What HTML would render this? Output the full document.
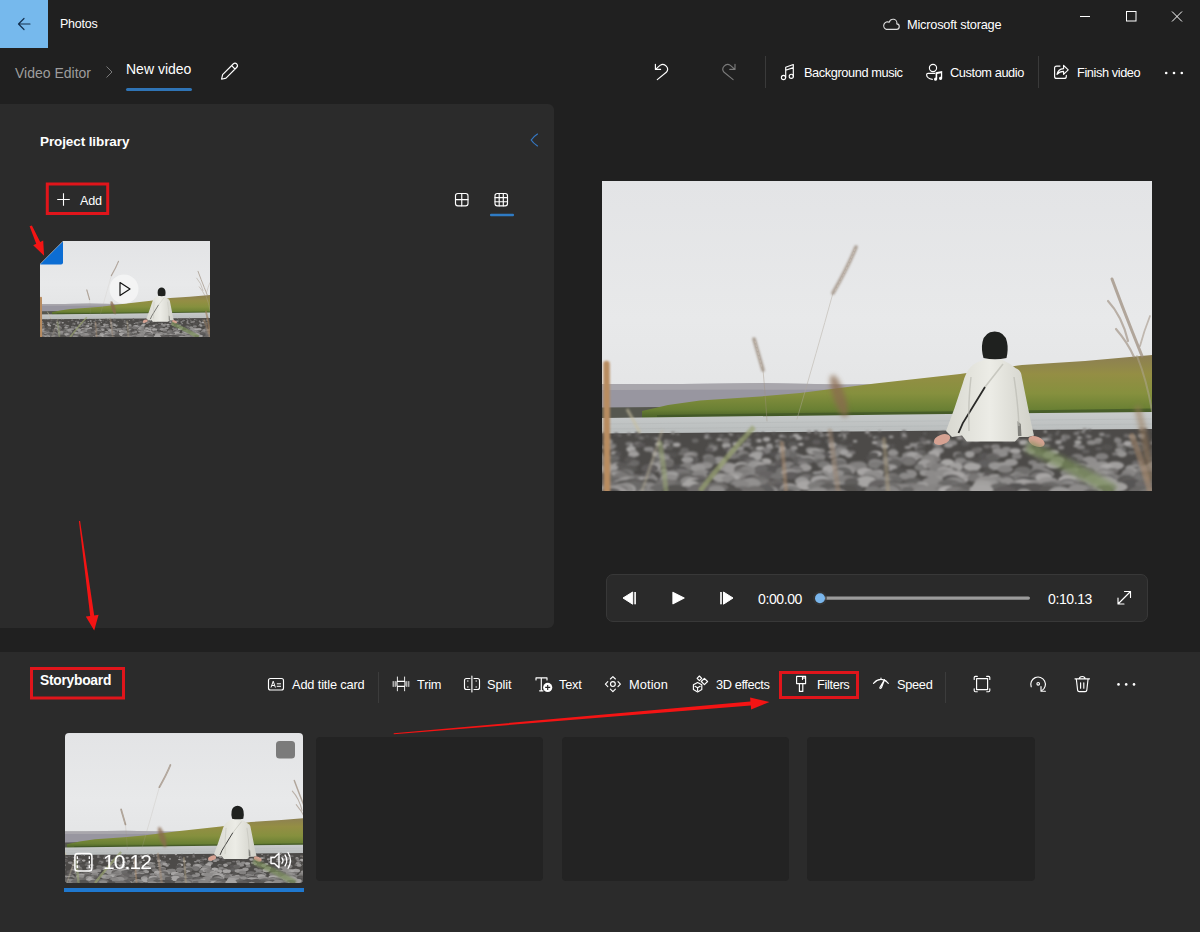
<!DOCTYPE html>
<html><head><meta charset="utf-8">
<style>
*{margin:0;padding:0;box-sizing:border-box}
html,body{width:1200px;height:932px;overflow:hidden;background:#202020;font-family:"Liberation Sans",sans-serif;color:#fff}
.a{position:absolute}
.t{position:absolute;white-space:nowrap;line-height:1}
svg.o{position:absolute;left:0;top:0}
.s{fill:none;stroke:#fff;stroke-width:1.15;stroke-linecap:round;stroke-linejoin:round}
</style></head><body>
<svg width="0" height="0" style="position:absolute"><symbol id="scene" viewBox="0 0 550 310">
<defs>
<linearGradient id="sky" x1="0" y1="0" x2="0" y2="1">
<stop offset="0" stop-color="#e3e4e6"/><stop offset="0.45" stop-color="#e8e9ea"/><stop offset="1" stop-color="#dfe0e1"/></linearGradient>
<linearGradient id="hill" x1="0" y1="0" x2="0" y2="1">
<stop offset="0" stop-color="#8c7e54"/><stop offset="0.3" stop-color="#948e44"/><stop offset="0.6" stop-color="#86903e"/><stop offset="0.85" stop-color="#6a8034"/><stop offset="1" stop-color="#445a26"/></linearGradient>
<linearGradient id="river" x1="0" y1="0" x2="0" y2="1">
<stop offset="0" stop-color="#c8cbcb"/><stop offset="1" stop-color="#b6baba"/></linearGradient>
<linearGradient id="jacket" x1="0" y1="0" x2="1" y2="0">
<stop offset="0" stop-color="#d8d8d0"/><stop offset="0.5" stop-color="#ecece6"/><stop offset="1" stop-color="#d0d0c8"/></linearGradient>
<filter id="b1" filterUnits="userSpaceOnUse" x="-50" y="-50" width="650" height="410"><feGaussianBlur stdDeviation="1.2"/></filter>
<filter id="b2" filterUnits="userSpaceOnUse" x="-50" y="-50" width="650" height="410"><feGaussianBlur stdDeviation="2.5"/></filter>
<filter id="b05" filterUnits="userSpaceOnUse" x="-50" y="-50" width="650" height="410"><feGaussianBlur stdDeviation="0.7"/></filter><filter id="b08" filterUnits="userSpaceOnUse" x="-50" y="-50" width="650" height="410"><feGaussianBlur stdDeviation="0.9"/></filter>
</defs>
<rect width="550" height="310" fill="url(#sky)"/>
<path d="M0 203 L80 203 L160 202 L240 203.5 L300 203 L360 201 L420 199 L420 240 L0 240Z" fill="#9896a0"/>
<path d="M0 203 L80 203 L160 202 L240 203.5 L300 203 L360 201 L420 199 L420 208 L0 209Z" fill="#b4b2b4" opacity="0.6" filter="url(#b05)"/>
<path d="M0 226.5 L60 226 L80 227 L80 238 L0 238Z" fill="#56574f"/>
<path d="M40 230 L66 224 L98 219.5 L158 215.5 L198 212 L273 202.5 L358 193 L420 184 L483 180 L550 174 L550 232 L300 234.5 L80 238 L40 238Z" fill="url(#hill)"/>
<path d="M55 234 L200 232 L380 230 L550 227.5 L550 232 L300 235 L55 238Z" fill="#3d5226" opacity="0.7"/>
<path d="M0 237 L300 233.5 L550 231 L550 256 L0 256Z" fill="url(#river)"/>
<path d="M0 243 L550 238 M0 248 L550 243" stroke="#a8acac" stroke-width="0.6" opacity="0.5"/>
<path d="M0 252.5 L550 248 L550 312 L0 312Z" fill="#4c4a48"/>
<g filter="url(#b08)">
<ellipse cx="539.1" cy="247.7" rx="2.2" ry="1.5" fill="#949291"/>
<ellipse cx="482.7" cy="248.3" rx="2.3" ry="1.4" fill="#92908f"/>
<ellipse cx="543.0" cy="248.6" rx="2.4" ry="1.3" fill="#646261"/>
<ellipse cx="487.8" cy="249.0" rx="1.7" ry="0.9" fill="#6c6a69"/>
<ellipse cx="401.4" cy="249.7" rx="1.6" ry="1.0" fill="#9d9b9a"/>
<ellipse cx="551.9" cy="249.9" rx="1.5" ry="0.9" fill="#6b6968"/>
<ellipse cx="277.7" cy="250.0" rx="1.6" ry="0.8" fill="#868483"/>
<ellipse cx="476.8" cy="250.1" rx="1.5" ry="0.9" fill="#716f6e"/>
<ellipse cx="349.6" cy="250.1" rx="1.4" ry="0.9" fill="#a6a4a3"/>
<ellipse cx="383.6" cy="250.2" rx="2.7" ry="1.5" fill="#555352"/>
<ellipse cx="430.7" cy="250.3" rx="2.1" ry="1.2" fill="#5b5958"/>
<ellipse cx="456.1" cy="250.6" rx="1.8" ry="1.0" fill="#6c6a69"/>
<ellipse cx="207.1" cy="250.6" rx="2.3" ry="1.4" fill="#9b9998"/>
<ellipse cx="443.3" cy="250.7" rx="1.7" ry="1.1" fill="#a9a7a6"/>
<ellipse cx="213.9" cy="250.8" rx="2.4" ry="1.2" fill="#72706f"/>
<ellipse cx="481.0" cy="250.9" rx="2.1" ry="1.4" fill="#898786"/>
<ellipse cx="302.0" cy="250.9" rx="2.5" ry="1.6" fill="#605e5d"/>
<ellipse cx="351.2" cy="250.9" rx="2.3" ry="1.4" fill="#7d7b7a"/>
<ellipse cx="218.8" cy="251.0" rx="1.9" ry="1.1" fill="#a9a7a6"/>
<ellipse cx="265.3" cy="251.1" rx="2.5" ry="1.5" fill="#a7a5a4"/>
<ellipse cx="341.2" cy="251.2" rx="2.0" ry="1.1" fill="#5f5d5c"/>
<ellipse cx="381.1" cy="251.3" rx="2.2" ry="1.1" fill="#8a8887"/>
<ellipse cx="422.9" cy="251.4" rx="1.6" ry="0.8" fill="#6f6d6c"/>
<ellipse cx="240.5" cy="251.5" rx="2.3" ry="1.3" fill="#716f6e"/>
<ellipse cx="245.0" cy="251.6" rx="2.5" ry="1.2" fill="#72706f"/>
<ellipse cx="145.6" cy="251.9" rx="1.5" ry="0.8" fill="#a09e9d"/>
<ellipse cx="70.9" cy="251.9" rx="2.4" ry="1.4" fill="#8c8a89"/>
<ellipse cx="355.2" cy="251.9" rx="2.8" ry="1.9" fill="#a3a1a0"/>
<ellipse cx="160.9" cy="252.1" rx="1.7" ry="1.1" fill="#535150"/>
<ellipse cx="338.0" cy="252.1" rx="1.6" ry="0.9" fill="#797776"/>
<ellipse cx="127.7" cy="252.2" rx="1.4" ry="0.8" fill="#a09e9d"/>
<ellipse cx="3.7" cy="252.3" rx="2.2" ry="1.0" fill="#5e5c5b"/>
<ellipse cx="214.2" cy="252.3" rx="2.0" ry="1.2" fill="#6f6d6c"/>
<ellipse cx="35.2" cy="252.4" rx="2.6" ry="1.7" fill="#5d5b5a"/>
<ellipse cx="474.5" cy="252.4" rx="3.0" ry="1.7" fill="#7e7c7b"/>
<ellipse cx="171.8" cy="252.5" rx="1.8" ry="1.1" fill="#5f5d5c"/>
<ellipse cx="322.9" cy="252.5" rx="1.9" ry="1.1" fill="#646261"/>
<ellipse cx="300.4" cy="252.7" rx="2.0" ry="0.9" fill="#6b6968"/>
<ellipse cx="1.4" cy="252.9" rx="2.2" ry="1.5" fill="#5d5b5a"/>
<ellipse cx="455.0" cy="253.0" rx="2.2" ry="1.1" fill="#6e6c6b"/>
<ellipse cx="76.0" cy="253.0" rx="1.6" ry="1.1" fill="#7f7d7c"/>
<ellipse cx="26.9" cy="253.1" rx="2.1" ry="1.3" fill="#7f7d7c"/>
<ellipse cx="14.2" cy="253.1" rx="2.2" ry="1.3" fill="#595756"/>
<ellipse cx="155.3" cy="253.4" rx="2.8" ry="1.7" fill="#595756"/>
<ellipse cx="499.8" cy="253.4" rx="2.8" ry="1.9" fill="#8b8988"/>
<ellipse cx="420.4" cy="253.5" rx="3.2" ry="1.5" fill="#6c6a69"/>
<ellipse cx="129.1" cy="253.5" rx="2.3" ry="1.4" fill="#868483"/>
<ellipse cx="241.4" cy="253.9" rx="2.2" ry="1.2" fill="#605e5d"/>
<ellipse cx="225.9" cy="253.9" rx="2.5" ry="1.2" fill="#9b9998"/>
<ellipse cx="105.0" cy="254.1" rx="2.7" ry="1.9" fill="#757372"/>
<ellipse cx="414.7" cy="254.2" rx="3.0" ry="1.6" fill="#a19f9e"/>
<ellipse cx="485.3" cy="254.3" rx="2.9" ry="1.9" fill="#615f5e"/>
<ellipse cx="17.7" cy="254.3" rx="1.7" ry="0.9" fill="#797776"/>
<ellipse cx="220.8" cy="254.3" rx="1.8" ry="1.2" fill="#7f7d7c"/>
<ellipse cx="447.8" cy="254.4" rx="2.7" ry="1.7" fill="#656362"/>
<ellipse cx="219.2" cy="254.4" rx="2.2" ry="1.2" fill="#8b8988"/>
<ellipse cx="193.9" cy="254.4" rx="3.2" ry="1.7" fill="#a7a5a4"/>
<ellipse cx="539.1" cy="254.4" rx="2.3" ry="1.1" fill="#6a6867"/>
<ellipse cx="237.8" cy="254.5" rx="1.8" ry="1.0" fill="#9b9998"/>
<ellipse cx="268.3" cy="254.5" rx="2.1" ry="1.0" fill="#787675"/>
<ellipse cx="119.1" cy="254.5" rx="2.7" ry="1.6" fill="#656362"/>
<ellipse cx="413.0" cy="254.6" rx="2.4" ry="1.3" fill="#5c5a59"/>
<ellipse cx="242.6" cy="254.6" rx="2.1" ry="1.0" fill="#a8a6a5"/>
<ellipse cx="524.6" cy="254.6" rx="3.0" ry="1.8" fill="#6e6c6b"/>
<ellipse cx="413.1" cy="254.7" rx="3.4" ry="1.7" fill="#a8a6a5"/>
<ellipse cx="505.6" cy="254.7" rx="3.0" ry="1.8" fill="#6c6a69"/>
<ellipse cx="539.3" cy="254.7" rx="3.4" ry="2.1" fill="#8d8b8a"/>
<ellipse cx="302.3" cy="254.8" rx="2.5" ry="1.7" fill="#a3a1a0"/>
<ellipse cx="136.8" cy="254.9" rx="2.3" ry="1.5" fill="#5c5a59"/>
<ellipse cx="179.5" cy="255.0" rx="2.9" ry="1.6" fill="#969493"/>
<ellipse cx="35.3" cy="255.1" rx="2.7" ry="1.8" fill="#5b5958"/>
<ellipse cx="45.1" cy="255.2" rx="2.7" ry="1.5" fill="#5c5a59"/>
<ellipse cx="388.5" cy="255.4" rx="3.4" ry="2.2" fill="#585655"/>
<ellipse cx="530.1" cy="255.7" rx="3.8" ry="1.9" fill="#807e7d"/>
<ellipse cx="182.8" cy="255.7" rx="2.2" ry="1.4" fill="#72706f"/>
<ellipse cx="189.2" cy="255.8" rx="2.7" ry="1.8" fill="#6c6a69"/>
<ellipse cx="487.0" cy="255.8" rx="2.9" ry="1.4" fill="#898786"/>
<ellipse cx="413.3" cy="255.9" rx="2.2" ry="1.2" fill="#575554"/>
<ellipse cx="289.1" cy="255.9" rx="2.5" ry="1.4" fill="#9a9897"/>
<ellipse cx="462.8" cy="255.9" rx="3.4" ry="2.3" fill="#8a8887"/>
<ellipse cx="464.9" cy="256.0" rx="3.7" ry="2.3" fill="#787675"/>
<ellipse cx="196.2" cy="256.1" rx="2.3" ry="1.4" fill="#a6a4a3"/>
<ellipse cx="426.1" cy="256.1" rx="2.3" ry="1.1" fill="#545251"/>
<ellipse cx="344.6" cy="256.2" rx="2.9" ry="1.4" fill="#a7a5a4"/>
<ellipse cx="104.4" cy="256.4" rx="2.3" ry="1.3" fill="#979594"/>
<ellipse cx="301.9" cy="256.7" rx="3.5" ry="1.8" fill="#5f5d5c"/>
<ellipse cx="477.3" cy="256.7" rx="2.6" ry="1.2" fill="#a9a7a6"/>
<ellipse cx="274.1" cy="256.7" rx="3.1" ry="1.4" fill="#9a9897"/>
<ellipse cx="357.6" cy="256.8" rx="3.1" ry="2.1" fill="#949291"/>
<ellipse cx="107.9" cy="256.8" rx="1.9" ry="0.9" fill="#737170"/>
<ellipse cx="275.4" cy="256.9" rx="2.6" ry="1.5" fill="#5c5a59"/>
<ellipse cx="540.5" cy="256.9" rx="2.2" ry="1.0" fill="#858382"/>
<ellipse cx="242.8" cy="256.9" rx="2.0" ry="0.9" fill="#888685"/>
<ellipse cx="197.0" cy="257.0" rx="3.4" ry="2.0" fill="#a3a1a0"/>
<ellipse cx="204.5" cy="257.0" rx="3.0" ry="2.0" fill="#666463"/>
<ellipse cx="344.8" cy="257.0" rx="3.0" ry="1.5" fill="#6a6867"/>
<ellipse cx="52.0" cy="257.0" rx="3.1" ry="1.8" fill="#5a5857"/>
<ellipse cx="39.4" cy="257.0" rx="2.8" ry="1.6" fill="#767473"/>
<ellipse cx="483.3" cy="257.5" rx="2.8" ry="1.6" fill="#535150"/>
<ellipse cx="531.3" cy="257.5" rx="2.5" ry="1.3" fill="#706e6d"/>
<ellipse cx="54.7" cy="257.7" rx="2.1" ry="1.2" fill="#8e8c8b"/>
<ellipse cx="514.9" cy="257.8" rx="2.5" ry="1.4" fill="#868483"/>
<ellipse cx="497.3" cy="257.9" rx="2.8" ry="1.5" fill="#5d5b5a"/>
<ellipse cx="402.1" cy="257.9" rx="2.9" ry="1.3" fill="#747271"/>
<ellipse cx="339.4" cy="258.1" rx="3.8" ry="2.2" fill="#999796"/>
<ellipse cx="364.7" cy="258.2" rx="3.9" ry="2.7" fill="#6f6d6c"/>
<ellipse cx="445.8" cy="258.2" rx="4.0" ry="2.0" fill="#797776"/>
<ellipse cx="374.1" cy="258.2" rx="3.7" ry="2.0" fill="#a5a3a2"/>
<ellipse cx="164.6" cy="258.3" rx="3.5" ry="2.4" fill="#a5a3a2"/>
<ellipse cx="320.6" cy="258.4" rx="3.1" ry="2.2" fill="#636160"/>
<ellipse cx="415.0" cy="258.5" rx="2.7" ry="1.2" fill="#858382"/>
<ellipse cx="442.4" cy="258.5" rx="3.9" ry="1.8" fill="#a2a09f"/>
<ellipse cx="117.2" cy="258.6" rx="2.9" ry="1.5" fill="#9b9998"/>
<ellipse cx="138.9" cy="258.6" rx="2.9" ry="1.4" fill="#716f6e"/>
<ellipse cx="515.8" cy="258.6" rx="2.6" ry="1.6" fill="#aba9a8"/>
<ellipse cx="461.2" cy="258.7" rx="3.1" ry="1.8" fill="#7e7c7b"/>
<ellipse cx="146.4" cy="258.9" rx="2.8" ry="1.9" fill="#747271"/>
<ellipse cx="366.9" cy="258.9" rx="3.3" ry="2.0" fill="#858382"/>
<ellipse cx="496.4" cy="258.9" rx="3.9" ry="1.9" fill="#969493"/>
<ellipse cx="186.0" cy="259.0" rx="2.4" ry="1.4" fill="#545251"/>
<ellipse cx="552.2" cy="259.0" rx="2.4" ry="1.3" fill="#646261"/>
<ellipse cx="240.8" cy="259.4" rx="3.0" ry="1.5" fill="#565453"/>
<ellipse cx="123.9" cy="259.4" rx="3.9" ry="2.6" fill="#737170"/>
<ellipse cx="156.6" cy="259.5" rx="3.9" ry="2.7" fill="#656362"/>
<ellipse cx="64.4" cy="259.6" rx="2.6" ry="1.4" fill="#777574"/>
<ellipse cx="408.5" cy="259.6" rx="2.9" ry="1.3" fill="#797776"/>
<ellipse cx="157.2" cy="259.7" rx="2.3" ry="1.2" fill="#aaa8a7"/>
<ellipse cx="93.2" cy="259.7" rx="3.4" ry="2.1" fill="#6b6968"/>
<ellipse cx="515.9" cy="259.7" rx="3.8" ry="2.4" fill="#848281"/>
<ellipse cx="404.2" cy="259.9" rx="3.4" ry="1.5" fill="#636160"/>
<ellipse cx="176.3" cy="260.0" rx="3.5" ry="1.6" fill="#979594"/>
<ellipse cx="253.1" cy="260.2" rx="2.2" ry="1.3" fill="#a5a3a2"/>
<ellipse cx="345.2" cy="260.3" rx="3.7" ry="2.5" fill="#888685"/>
<ellipse cx="227.8" cy="260.3" rx="4.0" ry="2.8" fill="#656362"/>
<ellipse cx="6.7" cy="260.5" rx="4.0" ry="2.6" fill="#8d8b8a"/>
<ellipse cx="68.2" cy="260.8" rx="3.2" ry="2.1" fill="#6a6867"/>
<ellipse cx="63.9" cy="260.9" rx="2.7" ry="1.3" fill="#807e7d"/>
<ellipse cx="326.4" cy="261.0" rx="3.0" ry="2.1" fill="#878584"/>
<ellipse cx="214.5" cy="261.0" rx="4.3" ry="2.6" fill="#5e5c5b"/>
<ellipse cx="495.5" cy="261.0" rx="4.3" ry="2.0" fill="#7a7877"/>
<ellipse cx="494.9" cy="261.1" rx="3.5" ry="1.9" fill="#858382"/>
<ellipse cx="476.0" cy="261.2" rx="3.4" ry="2.2" fill="#a2a09f"/>
<ellipse cx="456.4" cy="261.2" rx="3.2" ry="2.1" fill="#999796"/>
<ellipse cx="278.6" cy="261.3" rx="4.2" ry="2.3" fill="#716f6e"/>
<ellipse cx="421.6" cy="261.4" rx="4.6" ry="2.7" fill="#a8a6a5"/>
<ellipse cx="272.6" cy="261.6" rx="2.8" ry="1.6" fill="#a8a6a5"/>
<ellipse cx="489.4" cy="261.6" rx="4.6" ry="2.5" fill="#8b8988"/>
<ellipse cx="147.9" cy="261.8" rx="2.8" ry="1.3" fill="#585655"/>
<ellipse cx="351.4" cy="261.8" rx="3.9" ry="2.6" fill="#878584"/>
<ellipse cx="550.4" cy="262.0" rx="2.6" ry="1.3" fill="#807e7d"/>
<ellipse cx="134.1" cy="262.1" rx="4.0" ry="1.9" fill="#797776"/>
<ellipse cx="536.8" cy="262.2" rx="3.0" ry="1.4" fill="#737170"/>
<ellipse cx="321.4" cy="262.2" rx="2.6" ry="1.6" fill="#878584"/>
<ellipse cx="178.7" cy="262.4" rx="4.6" ry="2.9" fill="#605e5d"/>
<ellipse cx="363.2" cy="262.5" rx="4.0" ry="2.3" fill="#5c5a59"/>
<ellipse cx="525.9" cy="262.6" rx="4.2" ry="2.8" fill="#a7a5a4"/>
<ellipse cx="27.3" cy="262.7" rx="3.9" ry="2.0" fill="#7c7a79"/>
<ellipse cx="335.6" cy="262.8" rx="4.6" ry="2.2" fill="#949291"/>
<ellipse cx="56.1" cy="263.1" rx="3.1" ry="1.5" fill="#a8a6a5"/>
<ellipse cx="198.9" cy="263.2" rx="2.8" ry="1.5" fill="#a9a7a6"/>
<ellipse cx="73.2" cy="263.3" rx="2.5" ry="1.4" fill="#5e5c5b"/>
<ellipse cx="36.2" cy="263.4" rx="4.5" ry="2.7" fill="#797776"/>
<ellipse cx="144.4" cy="263.5" rx="4.6" ry="2.6" fill="#878584"/>
<ellipse cx="133.1" cy="263.5" rx="2.5" ry="1.7" fill="#a4a2a1"/>
<ellipse cx="124.6" cy="263.6" rx="4.2" ry="2.6" fill="#797776"/>
<ellipse cx="427.0" cy="263.6" rx="3.7" ry="2.3" fill="#7c7a79"/>
<ellipse cx="519.5" cy="263.6" rx="3.0" ry="1.4" fill="#a4a2a1"/>
<ellipse cx="74.7" cy="263.7" rx="3.8" ry="2.2" fill="#a5a3a2"/>
<ellipse cx="109.2" cy="263.7" rx="2.8" ry="1.9" fill="#62605f"/>
<ellipse cx="39.2" cy="263.8" rx="4.1" ry="2.1" fill="#5b5958"/>
<ellipse cx="539.5" cy="263.8" rx="2.9" ry="1.4" fill="#959392"/>
<ellipse cx="190.7" cy="263.9" rx="4.8" ry="3.3" fill="#5c5a59"/>
<ellipse cx="311.1" cy="263.9" rx="3.8" ry="2.2" fill="#8a8887"/>
<ellipse cx="518.2" cy="264.0" rx="3.8" ry="2.3" fill="#817f7e"/>
<ellipse cx="317.0" cy="264.0" rx="4.1" ry="2.7" fill="#908e8d"/>
<ellipse cx="167.4" cy="264.1" rx="3.0" ry="1.5" fill="#a4a2a1"/>
<ellipse cx="277.7" cy="264.1" rx="3.7" ry="1.8" fill="#747271"/>
<ellipse cx="248.4" cy="264.2" rx="2.8" ry="1.4" fill="#575554"/>
<ellipse cx="319.0" cy="264.3" rx="4.1" ry="2.6" fill="#5a5857"/>
<ellipse cx="30.1" cy="264.3" rx="2.4" ry="1.6" fill="#a3a1a0"/>
<ellipse cx="230.8" cy="264.5" rx="4.4" ry="2.9" fill="#a5a3a2"/>
<ellipse cx="32.7" cy="264.5" rx="2.8" ry="1.5" fill="#595756"/>
<ellipse cx="346.3" cy="264.6" rx="4.6" ry="2.1" fill="#999796"/>
<ellipse cx="443.9" cy="264.7" rx="4.2" ry="1.9" fill="#747271"/>
<ellipse cx="124.3" cy="264.7" rx="4.4" ry="2.3" fill="#a2a09f"/>
<ellipse cx="290.1" cy="264.7" rx="2.9" ry="1.4" fill="#595756"/>
<ellipse cx="474.7" cy="264.8" rx="3.2" ry="1.5" fill="#979594"/>
<ellipse cx="10.7" cy="264.9" rx="3.7" ry="2.4" fill="#7c7a79"/>
<ellipse cx="114.3" cy="264.9" rx="2.7" ry="1.7" fill="#5d5b5a"/>
<ellipse cx="175.6" cy="265.2" rx="2.9" ry="1.6" fill="#7d7b7a"/>
<ellipse cx="64.3" cy="265.2" rx="4.1" ry="2.8" fill="#9c9a99"/>
<ellipse cx="283.0" cy="265.2" rx="3.8" ry="2.3" fill="#a6a4a3"/>
<ellipse cx="529.5" cy="265.6" rx="3.0" ry="1.5" fill="#848281"/>
<ellipse cx="384.9" cy="265.6" rx="3.7" ry="1.8" fill="#6f6d6c"/>
<ellipse cx="-3.6" cy="265.7" rx="3.9" ry="2.4" fill="#989695"/>
<ellipse cx="393.5" cy="265.9" rx="4.3" ry="2.4" fill="#959392"/>
<ellipse cx="505.4" cy="266.2" rx="5.3" ry="3.0" fill="#545251"/>
<ellipse cx="478.8" cy="266.2" rx="4.0" ry="2.2" fill="#838180"/>
<ellipse cx="167.6" cy="266.2" rx="3.7" ry="2.0" fill="#939190"/>
<ellipse cx="8.6" cy="266.2" rx="3.8" ry="2.6" fill="#848281"/>
<ellipse cx="305.8" cy="266.3" rx="3.4" ry="1.6" fill="#92908f"/>
<ellipse cx="237.2" cy="266.4" rx="4.6" ry="3.1" fill="#72706f"/>
<ellipse cx="2.7" cy="266.4" rx="2.7" ry="1.3" fill="#7f7d7c"/>
<ellipse cx="459.1" cy="266.5" rx="3.1" ry="2.1" fill="#898786"/>
<ellipse cx="242.2" cy="266.5" rx="3.3" ry="2.3" fill="#6c6a69"/>
<ellipse cx="67.4" cy="266.7" rx="3.7" ry="2.5" fill="#5d5b5a"/>
<ellipse cx="149.5" cy="266.8" rx="2.8" ry="1.4" fill="#757372"/>
<ellipse cx="539.3" cy="266.9" rx="5.6" ry="3.8" fill="#5d5b5a"/>
<ellipse cx="192.2" cy="267.0" rx="3.4" ry="2.1" fill="#969493"/>
<ellipse cx="180.4" cy="267.2" rx="3.6" ry="1.9" fill="#a3a1a0"/>
<ellipse cx="138.1" cy="267.4" rx="3.9" ry="2.3" fill="#92908f"/>
<ellipse cx="111.7" cy="267.4" rx="4.1" ry="2.2" fill="#575554"/>
<ellipse cx="110.4" cy="267.4" rx="5.2" ry="3.0" fill="#838180"/>
<ellipse cx="158.2" cy="267.6" rx="4.5" ry="2.3" fill="#a9a7a6"/>
<ellipse cx="316.7" cy="267.7" rx="4.1" ry="2.4" fill="#777574"/>
<ellipse cx="436.1" cy="267.7" rx="3.1" ry="1.8" fill="#5f5d5c"/>
<ellipse cx="496.7" cy="267.7" rx="3.3" ry="1.7" fill="#615f5e"/>
<ellipse cx="394.0" cy="267.7" rx="4.1" ry="2.5" fill="#737170"/>
<ellipse cx="46.9" cy="268.2" rx="5.1" ry="2.4" fill="#8b8988"/>
<ellipse cx="29.0" cy="268.2" rx="4.6" ry="2.9" fill="#a9a7a6"/>
<ellipse cx="520.0" cy="268.3" rx="4.0" ry="2.3" fill="#706e6d"/>
<ellipse cx="126.9" cy="268.4" rx="5.4" ry="2.7" fill="#5b5958"/>
<ellipse cx="425.5" cy="268.4" rx="5.4" ry="2.5" fill="#8f8d8c"/>
<ellipse cx="107.3" cy="268.4" rx="3.7" ry="2.2" fill="#5e5c5b"/>
<ellipse cx="319.1" cy="268.5" rx="4.6" ry="2.2" fill="#535150"/>
<ellipse cx="376.4" cy="268.6" rx="3.7" ry="2.0" fill="#8a8887"/>
<ellipse cx="404.4" cy="268.6" rx="4.7" ry="2.9" fill="#8c8a89"/>
<ellipse cx="208.2" cy="269.1" rx="4.5" ry="2.9" fill="#8a8887"/>
<ellipse cx="130.6" cy="269.1" rx="4.2" ry="2.1" fill="#8c8a89"/>
<ellipse cx="82.6" cy="269.2" rx="4.4" ry="2.5" fill="#6b6968"/>
<ellipse cx="516.7" cy="269.2" rx="3.7" ry="2.5" fill="#8e8c8b"/>
<ellipse cx="59.1" cy="269.3" rx="3.9" ry="2.0" fill="#5a5857"/>
<ellipse cx="290.8" cy="269.3" rx="3.4" ry="2.1" fill="#6e6c6b"/>
<ellipse cx="336.0" cy="269.4" rx="5.9" ry="3.7" fill="#8f8d8c"/>
<ellipse cx="374.2" cy="269.6" rx="5.0" ry="2.9" fill="#6f6d6c"/>
<ellipse cx="410.7" cy="269.7" rx="3.7" ry="2.4" fill="#7b7978"/>
<ellipse cx="234.5" cy="269.8" rx="4.8" ry="2.7" fill="#797776"/>
<ellipse cx="212.8" cy="269.9" rx="4.8" ry="3.3" fill="#918f8e"/>
<ellipse cx="163.8" cy="269.9" rx="5.2" ry="3.0" fill="#7e7c7b"/>
<ellipse cx="239.3" cy="269.9" rx="5.4" ry="3.5" fill="#898786"/>
<ellipse cx="413.5" cy="270.0" rx="5.4" ry="2.8" fill="#a5a3a2"/>
<ellipse cx="335.1" cy="270.2" rx="4.1" ry="2.2" fill="#9f9d9c"/>
<ellipse cx="218.6" cy="270.2" rx="4.3" ry="3.0" fill="#848281"/>
<ellipse cx="187.6" cy="270.2" rx="5.6" ry="2.5" fill="#7e7c7b"/>
<ellipse cx="395.8" cy="270.2" rx="5.3" ry="3.3" fill="#908e8d"/>
<ellipse cx="180.3" cy="270.3" rx="3.9" ry="2.4" fill="#a4a2a1"/>
<ellipse cx="483.9" cy="270.4" rx="3.8" ry="2.2" fill="#62605f"/>
<ellipse cx="210.3" cy="270.5" rx="5.5" ry="3.6" fill="#92908f"/>
<ellipse cx="213.1" cy="270.7" rx="6.1" ry="3.0" fill="#a2a09f"/>
<ellipse cx="31.9" cy="270.8" rx="3.7" ry="1.8" fill="#868483"/>
<ellipse cx="429.7" cy="270.8" rx="3.7" ry="2.5" fill="#979594"/>
<ellipse cx="51.6" cy="271.1" rx="3.1" ry="1.5" fill="#797776"/>
<ellipse cx="213.2" cy="271.1" rx="3.6" ry="1.8" fill="#7f7d7c"/>
<ellipse cx="452.3" cy="271.2" rx="4.4" ry="2.3" fill="#a09e9d"/>
<ellipse cx="153.2" cy="271.4" rx="4.6" ry="3.1" fill="#676564"/>
<ellipse cx="242.8" cy="271.4" rx="4.8" ry="3.0" fill="#a3a1a0"/>
<ellipse cx="529.8" cy="271.5" rx="4.0" ry="2.0" fill="#6c6a69"/>
<ellipse cx="249.6" cy="271.5" rx="3.8" ry="2.1" fill="#777574"/>
<ellipse cx="129.6" cy="271.7" rx="4.5" ry="3.1" fill="#7c7a79"/>
<ellipse cx="291.0" cy="271.9" rx="5.5" ry="3.1" fill="#92908f"/>
<ellipse cx="154.1" cy="272.0" rx="4.0" ry="1.8" fill="#787675"/>
<ellipse cx="12.3" cy="272.3" rx="3.7" ry="2.2" fill="#9d9b9a"/>
<ellipse cx="318.3" cy="272.3" rx="5.8" ry="3.2" fill="#696766"/>
<ellipse cx="185.5" cy="272.4" rx="4.8" ry="3.1" fill="#5b5958"/>
<ellipse cx="157.8" cy="272.4" rx="5.6" ry="3.2" fill="#5e5c5b"/>
<ellipse cx="308.2" cy="272.4" rx="5.0" ry="2.6" fill="#737170"/>
<ellipse cx="183.7" cy="272.5" rx="5.4" ry="3.3" fill="#767473"/>
<ellipse cx="230.9" cy="272.5" rx="3.6" ry="1.9" fill="#7e7c7b"/>
<ellipse cx="79.7" cy="272.6" rx="3.6" ry="1.8" fill="#6f6d6c"/>
<ellipse cx="16.0" cy="272.7" rx="3.3" ry="2.3" fill="#575554"/>
<ellipse cx="141.2" cy="272.7" rx="6.2" ry="2.9" fill="#82807f"/>
<ellipse cx="156.3" cy="272.7" rx="4.4" ry="2.5" fill="#9f9d9c"/>
<ellipse cx="89.1" cy="272.7" rx="3.5" ry="2.1" fill="#646261"/>
<ellipse cx="91.1" cy="272.7" rx="3.7" ry="1.8" fill="#5b5958"/>
<ellipse cx="273.9" cy="272.8" rx="6.5" ry="3.0" fill="#aaa8a7"/>
<ellipse cx="551.6" cy="272.8" rx="6.6" ry="4.5" fill="#5c5a59"/>
<ellipse cx="513.5" cy="272.9" rx="3.5" ry="1.6" fill="#7e7c7b"/>
<ellipse cx="399.6" cy="273.0" rx="6.6" ry="3.3" fill="#8f8d8c"/>
<ellipse cx="216.8" cy="273.0" rx="4.4" ry="2.9" fill="#7d7b7a"/>
<ellipse cx="520.0" cy="273.1" rx="4.9" ry="3.2" fill="#969493"/>
<ellipse cx="31.7" cy="273.2" rx="5.7" ry="2.8" fill="#a19f9e"/>
<ellipse cx="229.6" cy="273.3" rx="5.2" ry="3.6" fill="#aba9a8"/>
<ellipse cx="367.5" cy="273.4" rx="5.1" ry="3.5" fill="#9f9d9c"/>
<ellipse cx="92.1" cy="273.4" rx="3.9" ry="2.7" fill="#787675"/>
<ellipse cx="232.6" cy="273.4" rx="5.0" ry="3.1" fill="#888685"/>
<ellipse cx="331.7" cy="273.5" rx="6.3" ry="4.3" fill="#a8a6a5"/>
<ellipse cx="54.6" cy="273.5" rx="4.0" ry="2.4" fill="#9e9c9b"/>
<ellipse cx="224.0" cy="273.5" rx="5.4" ry="2.5" fill="#575554"/>
<ellipse cx="90.0" cy="273.5" rx="4.8" ry="2.9" fill="#848281"/>
<ellipse cx="173.8" cy="273.6" rx="6.0" ry="3.0" fill="#555352"/>
<ellipse cx="548.2" cy="273.7" rx="6.8" ry="4.5" fill="#565453"/>
<ellipse cx="437.0" cy="273.7" rx="5.5" ry="3.2" fill="#686665"/>
<ellipse cx="271.6" cy="274.0" rx="5.0" ry="3.1" fill="#585655"/>
<ellipse cx="69.9" cy="274.0" rx="6.1" ry="3.0" fill="#545251"/>
<ellipse cx="446.6" cy="274.0" rx="5.5" ry="3.7" fill="#939190"/>
<ellipse cx="355.9" cy="274.1" rx="4.8" ry="3.3" fill="#8a8887"/>
<ellipse cx="305.2" cy="274.1" rx="5.0" ry="2.7" fill="#8a8887"/>
<ellipse cx="144.8" cy="274.2" rx="4.2" ry="2.3" fill="#6a6867"/>
<ellipse cx="-3.0" cy="274.2" rx="4.4" ry="3.1" fill="#7c7a79"/>
<ellipse cx="246.9" cy="274.3" rx="3.6" ry="2.4" fill="#9d9b9a"/>
<ellipse cx="323.6" cy="274.4" rx="4.5" ry="2.7" fill="#5d5b5a"/>
<ellipse cx="192.3" cy="274.5" rx="5.4" ry="3.7" fill="#6b6968"/>
<ellipse cx="61.7" cy="274.7" rx="4.4" ry="2.6" fill="#666463"/>
<ellipse cx="154.4" cy="274.8" rx="5.7" ry="2.6" fill="#8e8c8b"/>
<ellipse cx="551.8" cy="274.9" rx="6.9" ry="4.2" fill="#585655"/>
<ellipse cx="217.9" cy="275.0" rx="5.1" ry="2.8" fill="#6b6968"/>
<ellipse cx="358.4" cy="275.0" rx="5.9" ry="3.2" fill="#5a5857"/>
<ellipse cx="87.2" cy="275.1" rx="5.6" ry="3.8" fill="#949291"/>
<ellipse cx="131.0" cy="275.1" rx="5.9" ry="3.0" fill="#7a7877"/>
<ellipse cx="384.4" cy="275.1" rx="4.6" ry="2.4" fill="#595756"/>
<ellipse cx="414.8" cy="275.2" rx="5.0" ry="2.9" fill="#838180"/>
<ellipse cx="197.9" cy="275.2" rx="3.5" ry="1.8" fill="#939190"/>
<ellipse cx="62.1" cy="275.4" rx="5.9" ry="2.9" fill="#696766"/>
<ellipse cx="499.9" cy="275.5" rx="6.6" ry="3.6" fill="#817f7e"/>
<ellipse cx="311.0" cy="275.5" rx="6.8" ry="4.7" fill="#a3a1a0"/>
<ellipse cx="316.7" cy="275.6" rx="4.0" ry="2.0" fill="#949291"/>
<ellipse cx="382.0" cy="275.7" rx="5.7" ry="4.0" fill="#595756"/>
<ellipse cx="153.1" cy="275.9" rx="6.7" ry="4.3" fill="#a3a1a0"/>
<ellipse cx="-4.9" cy="275.9" rx="6.7" ry="4.4" fill="#8e8c8b"/>
<ellipse cx="88.2" cy="276.1" rx="4.5" ry="2.2" fill="#8a8887"/>
<ellipse cx="106.4" cy="276.1" rx="5.8" ry="3.0" fill="#7c7a79"/>
<ellipse cx="391.2" cy="276.1" rx="6.9" ry="4.2" fill="#6c6a69"/>
<ellipse cx="180.2" cy="276.2" rx="7.1" ry="4.5" fill="#757372"/>
<ellipse cx="217.4" cy="276.2" rx="5.9" ry="3.6" fill="#858382"/>
<ellipse cx="61.0" cy="276.3" rx="6.5" ry="4.2" fill="#7e7c7b"/>
<ellipse cx="63.3" cy="276.4" rx="4.0" ry="2.4" fill="#706e6d"/>
<ellipse cx="475.2" cy="276.5" rx="6.4" ry="3.8" fill="#7a7877"/>
<ellipse cx="140.2" cy="276.9" rx="4.1" ry="2.8" fill="#807e7d"/>
<ellipse cx="12.0" cy="277.0" rx="6.5" ry="4.1" fill="#585655"/>
<ellipse cx="11.4" cy="277.1" rx="5.9" ry="2.7" fill="#6b6968"/>
<ellipse cx="142.3" cy="277.1" rx="5.8" ry="3.8" fill="#585655"/>
<ellipse cx="197.0" cy="277.2" rx="4.7" ry="2.2" fill="#605e5d"/>
<ellipse cx="390.5" cy="277.2" rx="5.3" ry="3.6" fill="#646261"/>
<ellipse cx="61.1" cy="277.2" rx="6.3" ry="3.1" fill="#918f8e"/>
<ellipse cx="268.8" cy="277.2" rx="4.4" ry="2.6" fill="#545251"/>
<ellipse cx="290.8" cy="277.3" rx="6.5" ry="3.1" fill="#797776"/>
<ellipse cx="328.7" cy="277.4" rx="7.4" ry="4.3" fill="#868483"/>
<ellipse cx="325.3" cy="277.4" rx="6.2" ry="3.5" fill="#82807f"/>
<ellipse cx="305.3" cy="277.5" rx="3.8" ry="2.0" fill="#a2a09f"/>
<ellipse cx="205.1" cy="277.7" rx="7.1" ry="3.3" fill="#a6a4a3"/>
<ellipse cx="469.4" cy="277.8" rx="4.6" ry="2.6" fill="#555352"/>
<ellipse cx="286.1" cy="277.9" rx="5.7" ry="2.7" fill="#72706f"/>
<ellipse cx="551.1" cy="278.0" rx="5.7" ry="2.7" fill="#605e5d"/>
<ellipse cx="438.3" cy="278.1" rx="4.2" ry="2.7" fill="#5b5958"/>
<ellipse cx="303.2" cy="278.3" rx="5.1" ry="3.2" fill="#898786"/>
<ellipse cx="89.9" cy="278.4" rx="6.6" ry="3.9" fill="#636160"/>
<ellipse cx="333.7" cy="278.4" rx="5.1" ry="2.6" fill="#807e7d"/>
<ellipse cx="86.6" cy="278.6" rx="7.4" ry="3.5" fill="#585655"/>
<ellipse cx="374.5" cy="278.7" rx="4.7" ry="2.4" fill="#545251"/>
<ellipse cx="85.3" cy="278.8" rx="5.9" ry="3.1" fill="#9a9897"/>
<ellipse cx="327.0" cy="278.8" rx="5.6" ry="3.7" fill="#888685"/>
<ellipse cx="455.3" cy="279.0" rx="6.9" ry="3.2" fill="#939190"/>
<ellipse cx="28.1" cy="279.1" rx="5.8" ry="3.8" fill="#585655"/>
<ellipse cx="62.8" cy="279.1" rx="3.8" ry="2.2" fill="#9b9998"/>
<ellipse cx="296.2" cy="279.2" rx="5.8" ry="3.0" fill="#7e7c7b"/>
<ellipse cx="471.4" cy="279.2" rx="4.8" ry="2.6" fill="#575554"/>
<ellipse cx="484.1" cy="279.2" rx="4.5" ry="2.1" fill="#716f6e"/>
<ellipse cx="117.3" cy="279.4" rx="6.7" ry="3.8" fill="#939190"/>
<ellipse cx="205.3" cy="279.4" rx="7.0" ry="3.2" fill="#6b6968"/>
<ellipse cx="215.6" cy="279.5" rx="4.0" ry="2.1" fill="#757372"/>
<ellipse cx="56.2" cy="279.6" rx="5.7" ry="2.8" fill="#949291"/>
<ellipse cx="147.9" cy="279.7" rx="6.1" ry="3.9" fill="#615f5e"/>
<ellipse cx="287.3" cy="279.8" rx="4.8" ry="2.3" fill="#969493"/>
<ellipse cx="358.7" cy="279.9" rx="6.1" ry="3.0" fill="#898786"/>
<ellipse cx="4.8" cy="280.0" rx="7.0" ry="4.8" fill="#8c8a89"/>
<ellipse cx="6.5" cy="280.0" rx="7.6" ry="3.5" fill="#656362"/>
<ellipse cx="200.0" cy="280.1" rx="6.0" ry="3.8" fill="#6d6b6a"/>
<ellipse cx="107.7" cy="280.2" rx="6.9" ry="4.4" fill="#706e6d"/>
<ellipse cx="307.0" cy="280.3" rx="7.6" ry="4.7" fill="#72706f"/>
<ellipse cx="487.5" cy="280.4" rx="8.0" ry="5.2" fill="#908e8d"/>
<ellipse cx="66.3" cy="280.5" rx="5.2" ry="2.8" fill="#a6a4a3"/>
<ellipse cx="191.1" cy="280.5" rx="5.3" ry="2.8" fill="#615f5e"/>
<ellipse cx="164.0" cy="280.6" rx="5.6" ry="3.4" fill="#a7a5a4"/>
<ellipse cx="184.1" cy="280.7" rx="7.9" ry="4.7" fill="#535150"/>
<ellipse cx="306.7" cy="280.7" rx="5.2" ry="3.6" fill="#787675"/>
<ellipse cx="0.1" cy="281.0" rx="6.5" ry="4.2" fill="#817f7e"/>
<ellipse cx="237.0" cy="281.2" rx="7.4" ry="4.1" fill="#939190"/>
<ellipse cx="409.1" cy="281.4" rx="6.7" ry="3.6" fill="#999796"/>
<ellipse cx="457.6" cy="281.4" rx="4.6" ry="3.1" fill="#aba9a8"/>
<ellipse cx="430.5" cy="281.5" rx="4.3" ry="2.5" fill="#838180"/>
<ellipse cx="219.0" cy="281.6" rx="5.4" ry="3.6" fill="#656362"/>
<ellipse cx="345.5" cy="281.6" rx="6.9" ry="3.5" fill="#a9a7a6"/>
<ellipse cx="55.9" cy="281.7" rx="7.2" ry="5.0" fill="#6c6a69"/>
<ellipse cx="454.9" cy="281.8" rx="7.2" ry="4.6" fill="#8f8d8c"/>
<ellipse cx="157.4" cy="281.9" rx="4.8" ry="2.6" fill="#555352"/>
<ellipse cx="467.3" cy="282.0" rx="5.1" ry="2.5" fill="#9f9d9c"/>
<ellipse cx="153.3" cy="282.0" rx="4.5" ry="2.3" fill="#5a5857"/>
<ellipse cx="60.6" cy="282.0" rx="6.2" ry="3.0" fill="#8e8c8b"/>
<ellipse cx="32.8" cy="282.1" rx="4.8" ry="3.1" fill="#6b6968"/>
<ellipse cx="174.8" cy="282.2" rx="4.9" ry="2.5" fill="#5e5c5b"/>
<ellipse cx="535.2" cy="282.3" rx="5.2" ry="3.1" fill="#6d6b6a"/>
<ellipse cx="237.1" cy="282.3" rx="7.8" ry="3.8" fill="#706e6d"/>
<ellipse cx="150.2" cy="282.4" rx="7.4" ry="4.3" fill="#72706f"/>
<ellipse cx="284.8" cy="282.4" rx="7.0" ry="3.8" fill="#807e7d"/>
<ellipse cx="65.5" cy="282.4" rx="6.6" ry="4.4" fill="#6e6c6b"/>
<ellipse cx="366.3" cy="282.4" rx="5.5" ry="3.4" fill="#767473"/>
<ellipse cx="292.8" cy="282.6" rx="7.0" ry="4.7" fill="#646261"/>
<ellipse cx="273.7" cy="282.8" rx="7.6" ry="4.9" fill="#888685"/>
<ellipse cx="383.0" cy="282.9" rx="7.4" ry="4.1" fill="#615f5e"/>
<ellipse cx="466.3" cy="282.9" rx="6.3" ry="3.7" fill="#535150"/>
<ellipse cx="200.5" cy="283.0" rx="5.2" ry="2.8" fill="#7e7c7b"/>
<ellipse cx="322.9" cy="283.0" rx="7.4" ry="4.5" fill="#9f9d9c"/>
<ellipse cx="13.9" cy="283.3" rx="4.5" ry="2.8" fill="#636160"/>
<ellipse cx="551.2" cy="283.5" rx="5.7" ry="2.7" fill="#8f8d8c"/>
<ellipse cx="499.9" cy="283.6" rx="7.1" ry="3.7" fill="#92908f"/>
<ellipse cx="451.6" cy="283.8" rx="7.6" ry="3.8" fill="#a8a6a5"/>
<ellipse cx="440.4" cy="283.8" rx="4.6" ry="2.2" fill="#858382"/>
<ellipse cx="478.5" cy="283.8" rx="7.4" ry="4.8" fill="#615f5e"/>
<ellipse cx="274.0" cy="283.9" rx="8.0" ry="3.6" fill="#7c7a79"/>
<ellipse cx="222.3" cy="283.9" rx="6.5" ry="3.7" fill="#7c7a79"/>
<ellipse cx="16.1" cy="284.0" rx="5.6" ry="2.6" fill="#a09e9d"/>
<ellipse cx="162.9" cy="284.1" rx="5.6" ry="3.4" fill="#8a8887"/>
<ellipse cx="330.7" cy="284.3" rx="7.1" ry="3.7" fill="#888685"/>
<ellipse cx="19.6" cy="284.3" rx="6.0" ry="3.0" fill="#5a5857"/>
<ellipse cx="5.6" cy="284.4" rx="5.3" ry="2.7" fill="#8d8b8a"/>
<ellipse cx="401.1" cy="284.5" rx="5.8" ry="3.4" fill="#9a9897"/>
<ellipse cx="253.1" cy="284.5" rx="7.0" ry="4.0" fill="#7a7877"/>
<ellipse cx="99.2" cy="284.5" rx="6.5" ry="3.1" fill="#848281"/>
<ellipse cx="513.2" cy="284.6" rx="8.8" ry="4.1" fill="#a19f9e"/>
<ellipse cx="186.7" cy="284.6" rx="6.0" ry="3.9" fill="#838180"/>
<ellipse cx="104.6" cy="284.6" rx="6.2" ry="3.3" fill="#8f8d8c"/>
<ellipse cx="435.5" cy="284.7" rx="5.5" ry="2.9" fill="#888685"/>
<ellipse cx="-4.4" cy="284.8" rx="8.5" ry="4.4" fill="#7b7978"/>
<ellipse cx="393.8" cy="285.0" rx="7.2" ry="4.1" fill="#979594"/>
<ellipse cx="258.3" cy="285.2" rx="7.3" ry="4.7" fill="#767473"/>
<ellipse cx="153.8" cy="285.3" rx="8.7" ry="5.9" fill="#979594"/>
<ellipse cx="363.2" cy="285.3" rx="5.8" ry="3.2" fill="#5e5c5b"/>
<ellipse cx="257.1" cy="285.4" rx="7.3" ry="4.8" fill="#82807f"/>
<ellipse cx="336.6" cy="285.6" rx="7.3" ry="3.7" fill="#817f7e"/>
<ellipse cx="28.2" cy="285.6" rx="4.5" ry="3.0" fill="#747271"/>
<ellipse cx="370.3" cy="285.8" rx="8.7" ry="4.1" fill="#a6a4a3"/>
<ellipse cx="354.4" cy="285.9" rx="6.4" ry="4.4" fill="#a2a09f"/>
<ellipse cx="139.0" cy="285.9" rx="7.3" ry="5.0" fill="#a8a6a5"/>
<ellipse cx="169.9" cy="286.0" rx="6.0" ry="3.3" fill="#817f7e"/>
<ellipse cx="132.7" cy="286.2" rx="4.6" ry="2.4" fill="#6c6a69"/>
<ellipse cx="161.3" cy="286.3" rx="8.7" ry="5.0" fill="#a5a3a2"/>
<ellipse cx="194.8" cy="286.3" rx="7.1" ry="3.4" fill="#575554"/>
<ellipse cx="52.3" cy="286.4" rx="6.8" ry="4.7" fill="#a19f9e"/>
<ellipse cx="317.2" cy="286.4" rx="4.9" ry="3.3" fill="#7c7a79"/>
<ellipse cx="121.9" cy="286.5" rx="5.0" ry="2.9" fill="#9e9c9b"/>
<ellipse cx="288.7" cy="286.6" rx="6.3" ry="3.2" fill="#9f9d9c"/>
<ellipse cx="77.4" cy="286.7" rx="7.8" ry="3.8" fill="#555352"/>
<ellipse cx="203.3" cy="286.7" rx="6.4" ry="3.7" fill="#9b9998"/>
<ellipse cx="85.6" cy="286.8" rx="8.2" ry="5.3" fill="#7f7d7c"/>
<ellipse cx="534.4" cy="286.9" rx="5.0" ry="3.3" fill="#9c9a99"/>
<ellipse cx="125.4" cy="286.9" rx="8.5" ry="5.7" fill="#959392"/>
<ellipse cx="552.6" cy="287.0" rx="7.5" ry="3.7" fill="#706e6d"/>
<ellipse cx="281.8" cy="287.0" rx="5.6" ry="3.7" fill="#5a5857"/>
<ellipse cx="530.1" cy="287.0" rx="6.8" ry="3.3" fill="#918f8e"/>
<ellipse cx="96.2" cy="287.1" rx="7.4" ry="4.0" fill="#999796"/>
<ellipse cx="537.6" cy="287.4" rx="5.8" ry="3.1" fill="#898786"/>
<ellipse cx="47.7" cy="287.4" rx="8.6" ry="4.4" fill="#5e5c5b"/>
<ellipse cx="129.5" cy="287.4" rx="7.1" ry="4.8" fill="#9c9a99"/>
<ellipse cx="483.7" cy="287.5" rx="6.4" ry="3.6" fill="#8d8b8a"/>
<ellipse cx="493.3" cy="287.7" rx="8.9" ry="4.9" fill="#92908f"/>
<ellipse cx="504.5" cy="287.7" rx="7.6" ry="4.6" fill="#aba9a8"/>
<ellipse cx="10.4" cy="288.0" rx="6.7" ry="4.1" fill="#a19f9e"/>
<ellipse cx="403.3" cy="288.2" rx="7.7" ry="3.9" fill="#838180"/>
<ellipse cx="166.1" cy="288.2" rx="6.3" ry="4.4" fill="#5b5958"/>
<ellipse cx="26.6" cy="288.2" rx="8.8" ry="4.1" fill="#565453"/>
<ellipse cx="165.1" cy="288.2" rx="9.1" ry="5.2" fill="#5b5958"/>
<ellipse cx="479.7" cy="288.4" rx="9.1" ry="5.5" fill="#a3a1a0"/>
<ellipse cx="140.1" cy="288.5" rx="8.1" ry="5.5" fill="#676564"/>
<ellipse cx="23.2" cy="288.6" rx="8.5" ry="4.2" fill="#5c5a59"/>
<ellipse cx="159.1" cy="288.6" rx="7.4" ry="4.9" fill="#6a6867"/>
<ellipse cx="243.2" cy="288.6" rx="7.1" ry="4.1" fill="#aba9a8"/>
<ellipse cx="194.1" cy="288.6" rx="7.0" ry="3.5" fill="#777574"/>
<ellipse cx="174.1" cy="288.7" rx="9.2" ry="4.6" fill="#595756"/>
<ellipse cx="227.5" cy="288.7" rx="7.1" ry="3.3" fill="#a3a1a0"/>
<ellipse cx="545.1" cy="288.8" rx="9.3" ry="4.5" fill="#9f9d9c"/>
<ellipse cx="245.2" cy="289.0" rx="8.6" ry="5.7" fill="#8f8d8c"/>
<ellipse cx="435.7" cy="289.0" rx="6.5" ry="3.6" fill="#858382"/>
<ellipse cx="-2.1" cy="289.1" rx="9.0" ry="4.6" fill="#a19f9e"/>
<ellipse cx="228.4" cy="289.1" rx="7.9" ry="5.0" fill="#a8a6a5"/>
<ellipse cx="551.5" cy="289.2" rx="5.0" ry="2.8" fill="#535150"/>
<ellipse cx="537.9" cy="289.3" rx="7.5" ry="3.8" fill="#5a5857"/>
<ellipse cx="241.5" cy="289.4" rx="9.5" ry="5.1" fill="#969493"/>
<ellipse cx="332.9" cy="289.5" rx="6.1" ry="2.9" fill="#817f7e"/>
<ellipse cx="478.3" cy="289.6" rx="9.3" ry="5.8" fill="#5e5c5b"/>
<ellipse cx="530.4" cy="289.7" rx="5.3" ry="2.4" fill="#a4a2a1"/>
<ellipse cx="349.5" cy="289.7" rx="6.6" ry="3.4" fill="#716f6e"/>
<ellipse cx="510.2" cy="289.9" rx="6.4" ry="3.1" fill="#737170"/>
<ellipse cx="542.8" cy="290.0" rx="8.8" ry="5.5" fill="#838180"/>
<ellipse cx="145.5" cy="290.0" rx="7.8" ry="4.9" fill="#878584"/>
<ellipse cx="238.0" cy="290.1" rx="5.2" ry="3.6" fill="#858382"/>
<ellipse cx="79.3" cy="290.1" rx="6.7" ry="4.7" fill="#565453"/>
<ellipse cx="340.5" cy="290.2" rx="5.2" ry="2.5" fill="#737170"/>
<ellipse cx="420.5" cy="290.4" rx="8.7" ry="4.9" fill="#706e6d"/>
<ellipse cx="182.1" cy="290.7" rx="8.2" ry="4.8" fill="#757372"/>
<ellipse cx="343.2" cy="290.7" rx="8.8" ry="5.3" fill="#a09e9d"/>
<ellipse cx="386.6" cy="290.7" rx="5.3" ry="3.4" fill="#565453"/>
<ellipse cx="330.7" cy="290.8" rx="5.9" ry="2.7" fill="#7c7a79"/>
<ellipse cx="497.7" cy="291.0" rx="9.0" ry="5.2" fill="#939190"/>
<ellipse cx="62.1" cy="291.1" rx="5.2" ry="3.0" fill="#92908f"/>
<ellipse cx="263.5" cy="291.1" rx="8.8" ry="4.2" fill="#a7a5a4"/>
<ellipse cx="277.4" cy="291.3" rx="5.1" ry="2.5" fill="#7b7978"/>
<ellipse cx="472.1" cy="291.5" rx="7.9" ry="4.3" fill="#9c9a99"/>
<ellipse cx="484.3" cy="291.5" rx="9.2" ry="5.5" fill="#737170"/>
<ellipse cx="140.7" cy="291.6" rx="6.4" ry="3.8" fill="#858382"/>
<ellipse cx="466.8" cy="291.8" rx="8.4" ry="4.5" fill="#848281"/>
<ellipse cx="323.3" cy="291.9" rx="6.0" ry="3.4" fill="#999796"/>
<ellipse cx="196.3" cy="291.9" rx="5.4" ry="2.4" fill="#a5a3a2"/>
<ellipse cx="87.2" cy="291.9" rx="5.9" ry="2.9" fill="#656362"/>
<ellipse cx="240.7" cy="292.0" rx="9.1" ry="6.2" fill="#686665"/>
<ellipse cx="540.5" cy="292.1" rx="5.3" ry="2.8" fill="#7f7d7c"/>
<ellipse cx="372.4" cy="292.2" rx="6.5" ry="3.3" fill="#676564"/>
<ellipse cx="527.0" cy="292.2" rx="7.1" ry="4.5" fill="#888685"/>
<ellipse cx="23.9" cy="292.3" rx="8.1" ry="4.0" fill="#757372"/>
<ellipse cx="76.0" cy="292.4" rx="6.3" ry="4.1" fill="#545251"/>
<ellipse cx="69.6" cy="292.4" rx="6.2" ry="3.7" fill="#817f7e"/>
<ellipse cx="274.1" cy="292.4" rx="7.2" ry="3.7" fill="#a8a6a5"/>
<ellipse cx="14.6" cy="292.5" rx="6.7" ry="3.3" fill="#636160"/>
<ellipse cx="12.9" cy="292.5" rx="6.9" ry="3.7" fill="#7d7b7a"/>
<ellipse cx="503.5" cy="292.5" rx="8.7" ry="4.8" fill="#858382"/>
<ellipse cx="439.4" cy="292.5" rx="9.9" ry="6.5" fill="#868483"/>
<ellipse cx="100.0" cy="292.6" rx="8.6" ry="4.3" fill="#8d8b8a"/>
<ellipse cx="328.9" cy="292.7" rx="6.2" ry="3.8" fill="#8d8b8a"/>
<ellipse cx="79.6" cy="292.8" rx="8.8" ry="5.1" fill="#777574"/>
<ellipse cx="235.7" cy="292.8" rx="5.6" ry="3.7" fill="#62605f"/>
<ellipse cx="307.8" cy="293.0" rx="7.3" ry="4.5" fill="#8d8b8a"/>
<ellipse cx="187.7" cy="293.0" rx="9.5" ry="4.6" fill="#a09e9d"/>
<ellipse cx="220.7" cy="293.0" rx="6.9" ry="3.7" fill="#8f8d8c"/>
<ellipse cx="442.7" cy="293.0" rx="9.7" ry="4.4" fill="#8e8c8b"/>
<ellipse cx="17.8" cy="293.2" rx="7.3" ry="3.3" fill="#5b5958"/>
<ellipse cx="114.3" cy="293.3" rx="9.8" ry="4.6" fill="#535150"/>
<ellipse cx="296.5" cy="293.3" rx="9.3" ry="6.4" fill="#545251"/>
<ellipse cx="341.2" cy="293.3" rx="9.3" ry="5.0" fill="#8e8c8b"/>
<ellipse cx="359.9" cy="293.4" rx="8.3" ry="4.0" fill="#908e8d"/>
<ellipse cx="542.3" cy="293.4" rx="5.3" ry="2.6" fill="#a5a3a2"/>
<ellipse cx="361.7" cy="293.4" rx="6.2" ry="3.0" fill="#6a6867"/>
<ellipse cx="112.7" cy="293.5" rx="7.1" ry="4.5" fill="#62605f"/>
<ellipse cx="62.6" cy="293.5" rx="5.3" ry="3.5" fill="#6a6867"/>
<ellipse cx="350.0" cy="293.6" rx="9.0" ry="4.2" fill="#9e9c9b"/>
<ellipse cx="166.8" cy="293.7" rx="5.1" ry="2.7" fill="#5f5d5c"/>
<ellipse cx="438.3" cy="293.7" rx="6.3" ry="4.0" fill="#5e5c5b"/>
<ellipse cx="140.1" cy="293.9" rx="10.1" ry="5.6" fill="#7f7d7c"/>
<ellipse cx="0.9" cy="294.0" rx="8.5" ry="5.0" fill="#999796"/>
<ellipse cx="441.4" cy="294.1" rx="9.0" ry="4.7" fill="#747271"/>
<ellipse cx="196.4" cy="294.2" rx="5.6" ry="3.7" fill="#7c7a79"/>
<ellipse cx="-1.7" cy="294.2" rx="5.8" ry="3.5" fill="#797776"/>
<ellipse cx="235.4" cy="294.2" rx="7.8" ry="5.3" fill="#939190"/>
<ellipse cx="435.4" cy="294.3" rx="8.6" ry="6.0" fill="#5a5857"/>
<ellipse cx="379.2" cy="294.3" rx="5.6" ry="2.5" fill="#908e8d"/>
<ellipse cx="433.1" cy="294.5" rx="8.6" ry="4.4" fill="#898786"/>
<ellipse cx="163.8" cy="294.5" rx="9.6" ry="4.7" fill="#666463"/>
<ellipse cx="189.2" cy="294.5" rx="8.0" ry="4.0" fill="#5e5c5b"/>
<ellipse cx="96.2" cy="294.5" rx="7.1" ry="4.2" fill="#868483"/>
<ellipse cx="269.2" cy="294.6" rx="6.7" ry="3.8" fill="#62605f"/>
<ellipse cx="18.4" cy="294.8" rx="10.2" ry="5.7" fill="#62605f"/>
<ellipse cx="68.5" cy="294.8" rx="8.9" ry="5.3" fill="#767473"/>
<ellipse cx="15.5" cy="294.8" rx="8.2" ry="5.4" fill="#807e7d"/>
<ellipse cx="246.8" cy="294.9" rx="6.9" ry="3.3" fill="#5d5b5a"/>
<ellipse cx="540.9" cy="294.9" rx="8.5" ry="4.6" fill="#716f6e"/>
<ellipse cx="218.2" cy="294.9" rx="5.4" ry="3.6" fill="#5e5c5b"/>
<ellipse cx="71.5" cy="295.0" rx="8.7" ry="4.4" fill="#716f6e"/>
<ellipse cx="69.7" cy="295.0" rx="8.3" ry="4.2" fill="#a3a1a0"/>
<ellipse cx="436.1" cy="295.1" rx="10.5" ry="5.5" fill="#5a5857"/>
<ellipse cx="354.6" cy="295.2" rx="9.6" ry="4.7" fill="#a8a6a5"/>
<ellipse cx="302.6" cy="295.2" rx="5.6" ry="3.5" fill="#8c8a89"/>
<ellipse cx="175.8" cy="295.2" rx="7.1" ry="3.5" fill="#757372"/>
<ellipse cx="214.3" cy="295.3" rx="7.4" ry="4.8" fill="#a3a1a0"/>
<ellipse cx="474.1" cy="295.5" rx="5.8" ry="3.5" fill="#92908f"/>
<ellipse cx="386.1" cy="295.6" rx="5.6" ry="3.8" fill="#5b5958"/>
<ellipse cx="546.3" cy="295.6" rx="9.4" ry="5.8" fill="#646261"/>
<ellipse cx="46.7" cy="295.7" rx="7.1" ry="3.5" fill="#92908f"/>
<ellipse cx="366.8" cy="295.7" rx="5.4" ry="2.5" fill="#9b9998"/>
<ellipse cx="440.1" cy="295.8" rx="7.7" ry="3.8" fill="#a4a2a1"/>
<ellipse cx="14.0" cy="295.8" rx="8.6" ry="4.6" fill="#a7a5a4"/>
<ellipse cx="133.4" cy="295.9" rx="10.1" ry="4.6" fill="#9a9897"/>
<ellipse cx="445.3" cy="295.9" rx="5.4" ry="2.8" fill="#716f6e"/>
<ellipse cx="2.9" cy="296.0" rx="9.2" ry="4.5" fill="#6f6d6c"/>
<ellipse cx="271.0" cy="296.0" rx="10.7" ry="6.9" fill="#8f8d8c"/>
<ellipse cx="474.7" cy="296.0" rx="7.4" ry="4.0" fill="#82807f"/>
<ellipse cx="498.3" cy="296.3" rx="9.9" ry="6.0" fill="#777574"/>
<ellipse cx="414.8" cy="296.3" rx="8.0" ry="5.0" fill="#959392"/>
<ellipse cx="501.7" cy="296.4" rx="10.0" ry="6.5" fill="#9e9c9b"/>
<ellipse cx="437.5" cy="296.4" rx="9.6" ry="4.8" fill="#787675"/>
<ellipse cx="524.0" cy="296.4" rx="7.2" ry="4.8" fill="#7d7b7a"/>
<ellipse cx="494.4" cy="296.4" rx="7.7" ry="4.7" fill="#82807f"/>
<ellipse cx="130.7" cy="296.5" rx="6.4" ry="2.9" fill="#aba9a8"/>
<ellipse cx="203.9" cy="296.5" rx="10.5" ry="6.6" fill="#585655"/>
<ellipse cx="148.5" cy="296.6" rx="9.4" ry="4.9" fill="#8d8b8a"/>
<ellipse cx="203.9" cy="296.6" rx="6.5" ry="3.3" fill="#72706f"/>
<ellipse cx="371.7" cy="296.7" rx="6.2" ry="4.1" fill="#797776"/>
<ellipse cx="79.4" cy="296.7" rx="5.9" ry="2.9" fill="#aaa8a7"/>
<ellipse cx="441.7" cy="296.7" rx="8.2" ry="4.8" fill="#a7a5a4"/>
<ellipse cx="405.5" cy="296.7" rx="6.7" ry="3.5" fill="#a3a1a0"/>
<ellipse cx="254.4" cy="296.8" rx="5.9" ry="2.9" fill="#636160"/>
<ellipse cx="82.5" cy="296.9" rx="8.4" ry="5.1" fill="#696766"/>
<ellipse cx="119.6" cy="296.9" rx="9.1" ry="4.4" fill="#9d9b9a"/>
<ellipse cx="289.6" cy="296.9" rx="8.0" ry="5.2" fill="#747271"/>
<ellipse cx="403.2" cy="296.9" rx="5.7" ry="3.0" fill="#646261"/>
<ellipse cx="417.5" cy="297.1" rx="9.0" ry="4.8" fill="#7c7a79"/>
<ellipse cx="34.6" cy="297.1" rx="6.8" ry="3.3" fill="#5d5b5a"/>
<ellipse cx="506.9" cy="297.2" rx="7.1" ry="4.4" fill="#5e5c5b"/>
<ellipse cx="19.4" cy="297.5" rx="9.2" ry="6.3" fill="#797776"/>
<ellipse cx="146.3" cy="297.6" rx="8.2" ry="4.9" fill="#817f7e"/>
<ellipse cx="512.4" cy="297.7" rx="7.0" ry="4.6" fill="#7f7d7c"/>
<ellipse cx="44.0" cy="297.7" rx="8.9" ry="5.1" fill="#636160"/>
<ellipse cx="126.5" cy="297.9" rx="6.8" ry="4.1" fill="#8d8b8a"/>
<ellipse cx="504.8" cy="298.0" rx="8.9" ry="5.1" fill="#777574"/>
<ellipse cx="49.8" cy="298.1" rx="6.6" ry="3.5" fill="#898786"/>
<ellipse cx="-2.9" cy="298.1" rx="10.5" ry="6.4" fill="#5b5958"/>
<ellipse cx="233.1" cy="298.1" rx="10.0" ry="6.9" fill="#918f8e"/>
<ellipse cx="393.7" cy="298.3" rx="9.0" ry="5.2" fill="#a09e9d"/>
<ellipse cx="539.0" cy="298.4" rx="7.6" ry="4.8" fill="#757372"/>
<ellipse cx="422.5" cy="298.6" rx="7.3" ry="4.7" fill="#8d8b8a"/>
<ellipse cx="384.0" cy="298.6" rx="6.9" ry="3.4" fill="#605e5d"/>
<ellipse cx="74.9" cy="298.7" rx="6.1" ry="4.0" fill="#898786"/>
<ellipse cx="498.7" cy="298.7" rx="10.5" ry="6.9" fill="#858382"/>
<ellipse cx="216.8" cy="298.7" rx="10.8" ry="6.4" fill="#656362"/>
<ellipse cx="335.8" cy="298.7" rx="6.4" ry="3.1" fill="#a2a09f"/>
<ellipse cx="420.4" cy="298.8" rx="7.3" ry="3.8" fill="#757372"/>
<ellipse cx="150.1" cy="298.8" rx="8.4" ry="5.0" fill="#5b5958"/>
<ellipse cx="351.8" cy="298.9" rx="7.4" ry="3.6" fill="#979594"/>
<ellipse cx="265.2" cy="298.9" rx="10.6" ry="4.9" fill="#6b6968"/>
<ellipse cx="524.2" cy="298.9" rx="8.9" ry="4.6" fill="#5a5857"/>
<ellipse cx="293.3" cy="299.0" rx="7.5" ry="3.8" fill="#6b6968"/>
<ellipse cx="467.1" cy="299.0" rx="10.8" ry="5.0" fill="#aba9a8"/>
<ellipse cx="403.1" cy="299.2" rx="9.5" ry="6.3" fill="#636160"/>
<ellipse cx="360.5" cy="299.2" rx="5.8" ry="2.7" fill="#a19f9e"/>
<ellipse cx="71.6" cy="299.2" rx="5.9" ry="3.0" fill="#82807f"/>
<ellipse cx="67.4" cy="299.2" rx="10.1" ry="6.2" fill="#8f8d8c"/>
<ellipse cx="42.6" cy="299.3" rx="5.6" ry="2.7" fill="#9b9998"/>
<ellipse cx="85.1" cy="299.5" rx="10.9" ry="6.3" fill="#5f5d5c"/>
<ellipse cx="33.1" cy="299.7" rx="10.2" ry="6.5" fill="#706e6d"/>
<ellipse cx="243.1" cy="299.7" rx="11.0" ry="5.8" fill="#817f7e"/>
<ellipse cx="478.5" cy="299.8" rx="6.2" ry="3.8" fill="#92908f"/>
<ellipse cx="218.5" cy="299.9" rx="9.6" ry="5.5" fill="#a3a1a0"/>
<ellipse cx="256.5" cy="300.1" rx="7.1" ry="3.8" fill="#6e6c6b"/>
<ellipse cx="13.1" cy="300.1" rx="6.5" ry="3.8" fill="#686665"/>
<ellipse cx="392.9" cy="300.3" rx="9.2" ry="5.2" fill="#8b8988"/>
<ellipse cx="199.8" cy="300.6" rx="6.9" ry="4.7" fill="#9a9897"/>
<ellipse cx="338.3" cy="300.7" rx="6.1" ry="2.8" fill="#9d9b9a"/>
<ellipse cx="264.7" cy="300.7" rx="10.4" ry="5.6" fill="#a6a4a3"/>
<ellipse cx="86.9" cy="300.8" rx="8.5" ry="5.5" fill="#8c8a89"/>
<ellipse cx="490.2" cy="300.8" rx="9.5" ry="6.4" fill="#999796"/>
<ellipse cx="97.4" cy="300.8" rx="10.0" ry="6.6" fill="#666463"/>
<ellipse cx="349.6" cy="300.8" rx="10.9" ry="7.3" fill="#575554"/>
<ellipse cx="249.6" cy="301.0" rx="7.2" ry="3.9" fill="#5f5d5c"/>
<ellipse cx="405.0" cy="301.1" rx="7.0" ry="4.8" fill="#918f8e"/>
<ellipse cx="313.3" cy="301.1" rx="5.9" ry="3.7" fill="#aaa8a7"/>
<ellipse cx="156.2" cy="301.2" rx="10.4" ry="6.5" fill="#6f6d6c"/>
<ellipse cx="446.4" cy="301.3" rx="10.2" ry="5.2" fill="#959392"/>
<ellipse cx="424.7" cy="301.3" rx="11.5" ry="5.9" fill="#575554"/>
<ellipse cx="40.6" cy="301.3" rx="10.0" ry="5.3" fill="#a7a5a4"/>
<ellipse cx="352.7" cy="301.4" rx="10.6" ry="6.0" fill="#787675"/>
<ellipse cx="149.0" cy="301.5" rx="6.7" ry="3.8" fill="#908e8d"/>
<ellipse cx="528.3" cy="301.6" rx="9.2" ry="4.5" fill="#676564"/>
<ellipse cx="384.3" cy="301.8" rx="11.6" ry="6.9" fill="#949291"/>
<ellipse cx="281.6" cy="301.9" rx="9.8" ry="6.2" fill="#868483"/>
<ellipse cx="91.5" cy="302.0" rx="8.6" ry="5.2" fill="#a6a4a3"/>
<ellipse cx="26.4" cy="302.0" rx="11.1" ry="6.6" fill="#9d9b9a"/>
<ellipse cx="353.0" cy="302.1" rx="9.0" ry="5.0" fill="#8d8b8a"/>
<ellipse cx="159.0" cy="302.3" rx="8.3" ry="4.8" fill="#757372"/>
<ellipse cx="392.7" cy="302.4" rx="6.9" ry="3.1" fill="#6d6b6a"/>
<ellipse cx="328.1" cy="302.6" rx="10.7" ry="4.8" fill="#918f8e"/>
<ellipse cx="428.7" cy="302.7" rx="7.7" ry="3.8" fill="#a4a2a1"/>
<ellipse cx="1.8" cy="302.7" rx="7.0" ry="3.6" fill="#656362"/>
<ellipse cx="227.6" cy="302.8" rx="6.4" ry="4.0" fill="#676564"/>
<ellipse cx="163.9" cy="302.9" rx="6.2" ry="4.2" fill="#7b7978"/>
<ellipse cx="141.4" cy="302.9" rx="9.7" ry="5.5" fill="#716f6e"/>
<ellipse cx="18.4" cy="303.0" rx="7.7" ry="3.9" fill="#9d9b9a"/>
<ellipse cx="331.0" cy="303.0" rx="11.8" ry="7.3" fill="#8c8a89"/>
<ellipse cx="146.8" cy="303.0" rx="8.0" ry="3.9" fill="#918f8e"/>
<ellipse cx="176.7" cy="303.1" rx="6.9" ry="4.5" fill="#706e6d"/>
<ellipse cx="529.2" cy="303.1" rx="11.3" ry="5.1" fill="#575554"/>
<ellipse cx="451.4" cy="303.1" rx="6.3" ry="3.7" fill="#aaa8a7"/>
<ellipse cx="542.5" cy="303.3" rx="9.5" ry="4.4" fill="#6d6b6a"/>
<ellipse cx="221.5" cy="303.3" rx="11.0" ry="5.4" fill="#6e6c6b"/>
<ellipse cx="134.1" cy="303.5" rx="8.1" ry="4.9" fill="#6a6867"/>
<ellipse cx="387.0" cy="303.5" rx="10.1" ry="6.2" fill="#8d8b8a"/>
<ellipse cx="312.4" cy="303.6" rx="10.1" ry="6.6" fill="#646261"/>
<ellipse cx="465.9" cy="303.6" rx="10.8" ry="6.0" fill="#777574"/>
<ellipse cx="148.4" cy="303.7" rx="10.9" ry="6.8" fill="#92908f"/>
<ellipse cx="431.6" cy="303.8" rx="7.6" ry="5.1" fill="#92908f"/>
<ellipse cx="46.2" cy="303.9" rx="10.5" ry="6.7" fill="#565453"/>
<ellipse cx="347.1" cy="304.0" rx="11.8" ry="5.5" fill="#6b6968"/>
<ellipse cx="466.5" cy="304.2" rx="9.1" ry="4.1" fill="#908e8d"/>
<ellipse cx="137.8" cy="304.2" rx="9.4" ry="5.5" fill="#888685"/>
<ellipse cx="503.9" cy="304.2" rx="12.1" ry="8.3" fill="#a2a09f"/>
<ellipse cx="452.3" cy="304.3" rx="8.1" ry="5.1" fill="#838180"/>
<ellipse cx="22.2" cy="304.3" rx="11.9" ry="6.7" fill="#959392"/>
<ellipse cx="478.3" cy="304.5" rx="7.8" ry="5.0" fill="#797776"/>
<ellipse cx="97.1" cy="304.6" rx="12.2" ry="6.4" fill="#565453"/>
<ellipse cx="22.4" cy="304.6" rx="6.5" ry="3.9" fill="#6a6867"/>
<ellipse cx="203.5" cy="304.6" rx="8.9" ry="4.6" fill="#a8a6a5"/>
<ellipse cx="287.2" cy="304.6" rx="8.9" ry="5.2" fill="#7c7a79"/>
<ellipse cx="71.6" cy="304.7" rx="9.3" ry="5.7" fill="#6b6968"/>
<ellipse cx="307.1" cy="304.8" rx="8.9" ry="6.1" fill="#5b5958"/>
<ellipse cx="312.5" cy="304.8" rx="11.6" ry="6.7" fill="#656362"/>
<ellipse cx="31.9" cy="304.9" rx="11.7" ry="8.0" fill="#605e5d"/>
<ellipse cx="215.3" cy="305.0" rx="9.9" ry="4.6" fill="#7d7b7a"/>
<ellipse cx="386.6" cy="305.1" rx="12.0" ry="6.2" fill="#9a9897"/>
<ellipse cx="289.1" cy="305.1" rx="10.7" ry="5.6" fill="#5c5a59"/>
<ellipse cx="173.4" cy="305.3" rx="11.0" ry="6.6" fill="#676564"/>
<ellipse cx="9.3" cy="305.3" rx="9.9" ry="4.8" fill="#737170"/>
<ellipse cx="421.1" cy="305.4" rx="11.2" ry="7.5" fill="#a4a2a1"/>
<ellipse cx="319.8" cy="305.5" rx="6.9" ry="4.8" fill="#a3a1a0"/>
<ellipse cx="356.0" cy="305.6" rx="9.2" ry="4.7" fill="#72706f"/>
<ellipse cx="480.4" cy="305.8" rx="7.1" ry="4.0" fill="#5f5d5c"/>
<ellipse cx="235.0" cy="306.0" rx="8.6" ry="5.3" fill="#a09e9d"/>
<ellipse cx="380.4" cy="306.0" rx="10.3" ry="6.8" fill="#a2a09f"/>
<ellipse cx="515.0" cy="306.1" rx="10.4" ry="4.9" fill="#a2a09f"/>
<ellipse cx="276.0" cy="306.1" rx="6.3" ry="4.3" fill="#918f8e"/>
<ellipse cx="99.9" cy="306.2" rx="8.8" ry="5.1" fill="#716f6e"/>
<ellipse cx="22.2" cy="306.2" rx="11.1" ry="7.0" fill="#535150"/>
<ellipse cx="89.0" cy="306.3" rx="10.1" ry="6.5" fill="#a8a6a5"/>
<ellipse cx="277.1" cy="306.3" rx="11.3" ry="7.9" fill="#666463"/>
<ellipse cx="64.0" cy="306.3" rx="12.0" ry="8.3" fill="#747271"/>
<ellipse cx="289.2" cy="306.4" rx="10.6" ry="5.0" fill="#7a7877"/>
<ellipse cx="413.5" cy="306.5" rx="8.4" ry="4.4" fill="#a19f9e"/>
<ellipse cx="317.7" cy="306.5" rx="8.1" ry="3.9" fill="#92908f"/>
<ellipse cx="26.8" cy="306.6" rx="10.5" ry="5.3" fill="#908e8d"/>
<ellipse cx="124.6" cy="306.7" rx="9.3" ry="4.3" fill="#535150"/>
<ellipse cx="507.4" cy="306.7" rx="6.9" ry="3.5" fill="#898786"/>
<ellipse cx="46.9" cy="306.7" rx="8.7" ry="5.3" fill="#8a8887"/>
<ellipse cx="458.6" cy="306.9" rx="11.3" ry="5.5" fill="#7f7d7c"/>
<ellipse cx="176.3" cy="307.0" rx="7.0" ry="4.4" fill="#5b5958"/>
<ellipse cx="460.8" cy="307.1" rx="7.0" ry="3.6" fill="#6e6c6b"/>
<ellipse cx="409.9" cy="307.1" rx="9.1" ry="5.4" fill="#a5a3a2"/>
<ellipse cx="437.3" cy="307.4" rx="11.6" ry="5.6" fill="#92908f"/>
<ellipse cx="446.8" cy="307.4" rx="10.7" ry="5.7" fill="#706e6d"/>
<ellipse cx="465.7" cy="307.5" rx="6.6" ry="3.5" fill="#62605f"/>
<ellipse cx="428.7" cy="307.5" rx="10.6" ry="5.7" fill="#646261"/>
<ellipse cx="447.2" cy="307.5" rx="12.1" ry="6.8" fill="#6b6968"/>
<ellipse cx="238.7" cy="307.5" rx="7.8" ry="4.6" fill="#646261"/>
<ellipse cx="114.4" cy="307.6" rx="12.1" ry="6.6" fill="#6e6c6b"/>
<ellipse cx="466.0" cy="307.6" rx="9.7" ry="5.2" fill="#777574"/>
<ellipse cx="33.1" cy="307.7" rx="11.5" ry="7.4" fill="#6b6968"/>
<ellipse cx="310.3" cy="307.8" rx="12.0" ry="5.9" fill="#7e7c7b"/>
<ellipse cx="317.2" cy="307.8" rx="9.3" ry="4.2" fill="#848281"/>
<ellipse cx="432.4" cy="307.9" rx="11.0" ry="6.0" fill="#585655"/>
<ellipse cx="76.6" cy="307.9" rx="7.7" ry="3.7" fill="#5f5d5c"/>
<ellipse cx="398.9" cy="308.0" rx="11.8" ry="6.3" fill="#696766"/>
<ellipse cx="353.3" cy="308.1" rx="7.8" ry="4.1" fill="#565453"/>
<ellipse cx="298.7" cy="308.2" rx="10.4" ry="5.3" fill="#959392"/>
<ellipse cx="217.0" cy="308.2" rx="7.5" ry="5.1" fill="#7c7a79"/>
<ellipse cx="298.3" cy="308.3" rx="8.3" ry="4.4" fill="#848281"/>
<ellipse cx="114.6" cy="308.4" rx="8.2" ry="3.9" fill="#8c8a89"/>
<ellipse cx="58.3" cy="308.4" rx="10.8" ry="5.5" fill="#6b6968"/>
<ellipse cx="281.7" cy="308.5" rx="7.3" ry="4.7" fill="#585655"/>
<ellipse cx="24.9" cy="308.5" rx="8.9" ry="6.0" fill="#a2a09f"/>
<ellipse cx="360.3" cy="308.7" rx="10.7" ry="6.7" fill="#656362"/>
<ellipse cx="252.9" cy="308.7" rx="8.1" ry="5.6" fill="#575554"/>
<ellipse cx="19.6" cy="308.8" rx="12.0" ry="6.3" fill="#8d8b8a"/>
<ellipse cx="289.9" cy="308.8" rx="9.3" ry="6.2" fill="#6e6c6b"/>
<ellipse cx="96.4" cy="308.8" rx="10.6" ry="6.2" fill="#6d6b6a"/>
<ellipse cx="187.3" cy="309.0" rx="9.8" ry="6.8" fill="#a3a1a0"/>
<ellipse cx="227.2" cy="309.0" rx="10.7" ry="6.9" fill="#605e5d"/>
<ellipse cx="379.3" cy="309.0" rx="11.8" ry="5.5" fill="#a6a4a3"/>
<ellipse cx="483.8" cy="309.0" rx="11.0" ry="5.8" fill="#7e7c7b"/>
<ellipse cx="243.5" cy="309.0" rx="11.3" ry="5.8" fill="#535150"/>
<ellipse cx="-1.0" cy="309.1" rx="8.3" ry="4.1" fill="#9c9a99"/>
<ellipse cx="18.4" cy="309.2" rx="7.5" ry="4.1" fill="#666463"/>
<ellipse cx="501.9" cy="309.4" rx="9.8" ry="5.6" fill="#676564"/>
<ellipse cx="465.4" cy="309.4" rx="9.7" ry="5.9" fill="#5a5857"/>
<ellipse cx="168.3" cy="309.5" rx="7.8" ry="4.2" fill="#8b8988"/>
<ellipse cx="140.9" cy="309.5" rx="8.4" ry="4.2" fill="#706e6d"/>
<ellipse cx="187.8" cy="309.5" rx="10.8" ry="5.0" fill="#7d7b7a"/>
<ellipse cx="413.7" cy="309.7" rx="12.6" ry="8.0" fill="#555352"/>
<ellipse cx="476.2" cy="309.8" rx="10.9" ry="6.9" fill="#8d8b8a"/>
<ellipse cx="333.1" cy="309.9" rx="12.4" ry="7.0" fill="#878584"/>
<ellipse cx="7.9" cy="310.0" rx="10.1" ry="4.9" fill="#989695"/>
<ellipse cx="494.1" cy="310.1" rx="6.8" ry="3.5" fill="#92908f"/>
<ellipse cx="306.0" cy="310.2" rx="6.7" ry="4.6" fill="#6b6968"/>
<ellipse cx="339.6" cy="310.3" rx="8.6" ry="5.0" fill="#7a7877"/>
<ellipse cx="345.9" cy="310.5" rx="10.1" ry="5.7" fill="#aaa8a7"/>
<ellipse cx="445.3" cy="310.5" rx="8.8" ry="6.2" fill="#5c5a59"/>
<ellipse cx="160.5" cy="310.6" rx="7.4" ry="5.0" fill="#706e6d"/>
<ellipse cx="162.4" cy="310.6" rx="10.2" ry="7.0" fill="#615f5e"/>
<ellipse cx="231.2" cy="310.6" rx="7.2" ry="4.2" fill="#7b7978"/>
<ellipse cx="131.9" cy="310.9" rx="8.7" ry="4.7" fill="#535150"/>
<ellipse cx="15.3" cy="311.2" rx="7.0" ry="3.8" fill="#868483"/>
<ellipse cx="152.8" cy="311.4" rx="10.6" ry="6.7" fill="#6f6d6c"/>
<ellipse cx="271.1" cy="311.4" rx="9.1" ry="6.2" fill="#7c7a79"/>
<ellipse cx="421.8" cy="311.6" rx="6.8" ry="3.9" fill="#918f8e"/>
<ellipse cx="488.9" cy="311.7" rx="7.0" ry="3.5" fill="#a3a1a0"/>
<ellipse cx="81.7" cy="311.7" rx="12.4" ry="6.8" fill="#6d6b6a"/>
<ellipse cx="457.8" cy="311.7" rx="11.2" ry="6.0" fill="#999796"/>
<ellipse cx="353.0" cy="312.0" rx="10.7" ry="6.6" fill="#7b7978"/>
<ellipse cx="320.1" cy="312.2" rx="9.2" ry="5.9" fill="#898786"/>
<ellipse cx="489.7" cy="312.2" rx="8.6" ry="4.0" fill="#5f5d5c"/>
<ellipse cx="230.8" cy="312.3" rx="13.4" ry="6.6" fill="#646261"/>
<ellipse cx="286.7" cy="312.3" rx="11.4" ry="7.8" fill="#888685"/>
<ellipse cx="73.2" cy="312.3" rx="13.5" ry="8.9" fill="#545251"/>
<ellipse cx="13.8" cy="312.4" rx="12.7" ry="7.3" fill="#9b9998"/>
<ellipse cx="360.9" cy="312.4" rx="7.5" ry="4.3" fill="#706e6d"/>
<ellipse cx="403.8" cy="312.4" rx="12.4" ry="7.7" fill="#5e5c5b"/>
<ellipse cx="216.8" cy="312.5" rx="10.3" ry="5.2" fill="#5f5d5c"/>
<ellipse cx="217.6" cy="312.6" rx="7.8" ry="5.2" fill="#767473"/>
<ellipse cx="327.6" cy="312.6" rx="11.3" ry="5.5" fill="#878584"/>
<ellipse cx="539.0" cy="312.6" rx="13.4" ry="7.6" fill="#686665"/>
<ellipse cx="8.9" cy="312.7" rx="10.2" ry="5.8" fill="#575554"/>
<ellipse cx="184.8" cy="312.7" rx="9.4" ry="4.3" fill="#575554"/>
<ellipse cx="44.0" cy="312.8" rx="9.6" ry="5.6" fill="#868483"/>
<ellipse cx="216.5" cy="312.8" rx="11.6" ry="6.5" fill="#908e8d"/>
<ellipse cx="279.5" cy="312.9" rx="8.0" ry="4.8" fill="#767473"/>
<ellipse cx="550.0" cy="312.9" rx="13.2" ry="6.3" fill="#787675"/>
<ellipse cx="233.5" cy="313.0" rx="11.5" ry="5.7" fill="#817f7e"/>
</g>
<g>
<path d="M384.4 177.5 L400.4 178.9 Q408 182 413.7 187.2 Q418 189 419.2 192.8 L423.4 213.7 L429 241.6 L432 254.5 L426 256 L417 256 L413 260.5 L364.8 260.5 L360 254.5 L350 256 L344 250 L352.3 227.7 L360.7 202.6 Q364 190 369 185.8 Q374 181 378.8 180.3 Z" fill="url(#jacket)"/>
<path d="M415.5 240 L418.8 243 L419.5 255 L416 255Z" fill="#6a6a66" opacity="0.8" filter="url(#b05)"/>
<path d="M401 183 L383 206" stroke="#c8c8c0" stroke-width="1.6" fill="none"/>
<path d="M383 206 L360.7 242.4 L356.5 252" stroke="#2a2a28" stroke-width="1.8" fill="none"/>
<path d="M369 196 Q366 220 367 250 M412 196 Q416 222 417 245" stroke="#bcbcb4" stroke-width="1.5" fill="none" opacity="0.7" filter="url(#b05)"/>
<path d="M381.5 177 Q379 168 380.5 161 Q382.5 151 392.7 150.5 Q403 151 405 161 Q406.5 168 404.5 177 Q393 179.5 381.5 177Z" fill="#1f211f"/>
<ellipse cx="340" cy="258.5" rx="8.5" ry="4.8" fill="#d6a292" transform="rotate(-20 340 258.5)"/>
<ellipse cx="434.5" cy="260.5" rx="8.5" ry="4.8" fill="#d6a292" transform="rotate(22 434.5 260.5)"/>
</g>
<g fill="none" stroke-linecap="round">
<path d="M231 112 Q215 170 195 238" stroke="#b0a89c" stroke-width="1" opacity="0.45" filter="url(#b05)"/>
<path d="M254 66 Q246 86 231 112" stroke="#9a8a7c" stroke-width="3.6" opacity="0.75" filter="url(#b08)"/>
<path d="M253 68 Q246 86 233 110" stroke="#c8beb4" stroke-width="1.2" stroke-dasharray="2 2" opacity="0.7"/>
<path d="M152 158 Q156 172 161 189" stroke="#948474" stroke-width="3.6" opacity="0.75" filter="url(#b08)"/>
<path d="M153 160 Q156 172 160 187" stroke="#c8beb4" stroke-width="1.2" stroke-dasharray="2 2" opacity="0.7"/>
<path d="M161 189 Q163 210 165 240" stroke="#a09080" stroke-width="0.8" opacity="0.5"/>
<path d="M4.5 183 L5 310" stroke="#b88c60" stroke-width="6.5" filter="url(#b1)"/>
<path d="M510 98 Q520 125 530 150 Q536 165 540 175" stroke="#9a8a7a" stroke-width="3" opacity="0.7" filter="url(#b05)"/>
<path d="M506 120 Q520 135 526 160" stroke="#9a8a7a" stroke-width="2.2" opacity="0.6" filter="url(#b05)"/>
<path d="M514 148 Q526 162 532 176" stroke="#9a8a7a" stroke-width="2.2" opacity="0.6" filter="url(#b05)"/>
<path d="M548 135 Q542 150 538 165" stroke="#a09080" stroke-width="1.8" opacity="0.55" filter="url(#b05)"/>
<path d="M535 175 Q545 200 550 230" stroke="#b0a898" stroke-width="2" opacity="0.5" filter="url(#b05)"/>
</g>
<ellipse cx="237" cy="215" rx="6" ry="22" transform="rotate(-18 237 215)" fill="#8a6a50" filter="url(#b2)" opacity="0.75"/>
<path d="M152 246 Q125 275 98 310" stroke="#98a270" stroke-width="5" fill="none" filter="url(#b1)" opacity="0.7"/>
<path d="M425 265 Q470 285 512 310" stroke="#7a9058" stroke-width="12" fill="none" filter="url(#b2)" opacity="0.65"/>
<path d="M535 225 Q545 260 548 300" stroke="#9a7a58" stroke-width="6" fill="none" filter="url(#b2)" opacity="0.6"/>
<path d="M25 228 Q32 240 38 252" stroke="#c8c0a0" stroke-width="3" fill="none" filter="url(#b1)" opacity="0.6"/>
<g fill="none" stroke-linecap="round" filter="url(#b1)">
<path d="M58 262 Q62 285 64 310" stroke="#9aa878" stroke-width="5" opacity="0.55"/>
<path d="M180 262 Q182 285 184 310" stroke="#b09070" stroke-width="4" opacity="0.5"/>
<path d="M228 250 Q232 280 236 310" stroke="#a08870" stroke-width="5" opacity="0.45"/>
<path d="M282 258 Q284 285 286 310" stroke="#b0a080" stroke-width="4" opacity="0.45"/>
<path d="M60 250 Q52 275 40 310" stroke="#c0b8a0" stroke-width="3" opacity="0.4"/>
<path d="M530 255 Q540 280 548 310" stroke="#b09070" stroke-width="6" opacity="0.5"/>
</g>
</symbol></svg>

<!-- title bar -->
<div class="a" style="left:0;top:0;width:48px;height:48px;background:#76b9ed"></div>
<div class="t" style="left:60px;top:18px;font-size:12.5px;letter-spacing:-0.25px">Photos</div>
<div class="t" style="left:907px;top:19px;font-size:12.8px;letter-spacing:-0.22px">Microsoft storage</div>

<!-- header -->
<div class="t" style="left:15px;top:66px;font-size:14px;letter-spacing:0px;color:#9d9d9d">Video Editor</div>
<div class="t" style="left:126px;top:62px;font-size:14px;letter-spacing:0px">New video</div>
<div class="a" style="left:126px;top:88px;width:66px;height:3px;background:#2f74b5;border-radius:1.5px"></div>

<div class="t" style="left:804px;top:67px;font-size:12.8px;letter-spacing:-0.42px">Background music</div>
<div class="t" style="left:950px;top:67px;font-size:12.8px;letter-spacing:-0.42px">Custom audio</div>
<div class="t" style="left:1077px;top:67px;font-size:12.8px;letter-spacing:-0.42px">Finish video</div>

<!-- panel -->
<div class="a" style="left:0;top:104px;width:554px;height:524px;background:#2b2b2b;border-radius:0 6px 6px 0"></div>
<div class="t" style="left:40px;top:134.5px;font-size:13.5px;font-weight:bold;letter-spacing:-0.1px">Project library</div>
<div class="t" style="left:80px;top:194.5px;font-size:12.6px;letter-spacing:-0.2px">Add</div>

<!-- library thumb -->
<svg class="a" style="left:40px;top:241px;clip-path:polygon(23px 0,100% 0,100% 100%,0 100%,0 23px)" width="170" height="96" viewBox="0 0.5 550 309" preserveAspectRatio="xMidYMid slice"><use href="#scene" width="550" height="310"/></svg>

<!-- preview -->
<svg class="a" style="left:602px;top:181px" width="550" height="310"><use href="#scene" width="550" height="310"/></svg>

<!-- player -->
<div class="a" style="left:606px;top:574px;width:542px;height:48px;background:#2a2a2a;border:1px solid #383838;border-radius:7px"></div>
<div class="t" style="left:758px;top:592px;font-size:14px;letter-spacing:-0.4px">0:00.00</div>
<div class="t" style="left:1048px;top:592px;font-size:14px;letter-spacing:-0.4px">0:10.13</div>

<!-- storyboard -->
<div class="a" style="left:0;top:652px;width:1200px;height:280px;background:#2b2b2b"></div>
<div class="t" style="left:40px;top:673.5px;font-size:13.8px;font-weight:bold;letter-spacing:-0.25px">Storyboard</div>
<div class="t" style="left:292px;top:679px;font-size:12.8px;letter-spacing:-0.15px">Add title card</div>
<div class="t" style="left:417px;top:679px;font-size:12.8px;letter-spacing:-0.2px">Trim</div>
<div class="t" style="left:487px;top:679px;font-size:12.8px;letter-spacing:-0.1px">Split</div>
<div class="t" style="left:559px;top:679px;font-size:12.8px;letter-spacing:-0.2px">Text</div>
<div class="t" style="left:629px;top:679px;font-size:12.8px;letter-spacing:0.1px">Motion</div>
<div class="t" style="left:716px;top:679px;font-size:12.8px;letter-spacing:-0.4px">3D effects</div>
<div class="t" style="left:817px;top:679px;font-size:12.8px;letter-spacing:-0.35px">Filters</div>
<div class="t" style="left:897px;top:679px;font-size:12.8px;letter-spacing:-0.3px">Speed</div>

<svg class="a" style="left:65px;top:733px;border-radius:4px" width="238" height="150" viewBox="36 0 492 310"><use href="#scene" width="550" height="310"/></svg>
<div class="a" style="left:64px;top:888px;width:240px;height:4px;background:#1f78cf"></div>
<div class="a" style="left:316px;top:737px;width:227px;height:144px;background:#232323;border-radius:4px"></div>
<div class="a" style="left:562px;top:737px;width:227px;height:144px;background:#232323;border-radius:4px"></div>
<div class="a" style="left:807px;top:737px;width:228px;height:144px;background:#232323;border-radius:4px"></div>
<div class="t" style="left:103px;top:850.5px;font-size:21px;letter-spacing:-0.9px">10.12</div>

<svg class="o" width="1200" height="932">
<!-- back arrow -->
<path d="M18.5 24H30M24 18.5L18.5 24L24 29.5" fill="none" stroke="#14304e" stroke-width="1.2" stroke-linejoin="round" stroke-linecap="round"/>
<!-- cloud -->
<path class="s" d="M886 29.3H896.3A2.7 2.7 0 0 0 896.8 23.9A3.8 3.8 0 0 0 889.3 22.2A3.4 3.4 0 0 0 886 29.3Z" style="stroke:#e0e0e0"/>
<!-- window controls -->
<path d="M1080 16.5H1090" stroke="#fff" stroke-width="1"/>
<rect x="1126.5" y="11.5" width="9.5" height="9.5" fill="none" stroke="#fff" stroke-width="1"/>
<path d="M1172 11.5L1182 21.5M1182 11.5L1172 21.5" stroke="#fff" stroke-width="1"/>
<!-- breadcrumb chevron -->
<path d="M106.5 66.5L112 72L106.5 77.5" fill="none" stroke="#7a7a7a" stroke-width="1"/>
<!-- pencil -->
<path class="s" d="M221.6 79.2L222.6 74.6L233.2 64Q235 62.4 236.8 64Q238.3 65.8 236.6 67.5L226 78.1Z M231.6 65.6L235 69"/>
<!-- undo -->
<path class="s" d="M655.4 64.3V69.4H660.6 M655.8 69.1L660 65.4A4.7 4.7 0 0 1 666.3 72.3L657.3 79.6"/>
<!-- redo -->
<path class="s" style="stroke:#7a7a7a" d="M735 64.3V69.4H729.8 M734.6 69.1L730.4 65.4A4.7 4.7 0 0 0 724.1 72.3L733.1 79.6"/>
<!-- separators -->
<path d="M765.5 56V88M1038.5 56V88" stroke="#3a3a3a" stroke-width="1"/>
<!-- music -->
<path class="s" d="M785.7 77.3V67.3L793.3 64.5V76.3M785.7 70.2L793.3 67.6"/>
<circle class="s" cx="783.5" cy="77.5" r="2.1"/><circle class="s" cx="791.3" cy="76.3" r="2.1"/>
<!-- custom audio -->
<circle class="s" cx="933" cy="68" r="3.6"/>
<path class="s" d="M934.8 73.4H928Q926.6 73.4 926.6 74.8Q926.8 78.5 932.4 79.4"/>
<path fill="#fff" d="M935.6 72.2L942.2 70.9V78.3A1.6 1.6 0 1 1 940.9 76.8V73.2L937.2 73.9V79A1.6 1.6 0 1 1 935.6 77.5Z"/>
<!-- finish video -->
<path class="s" d="M1060 66.1H1056.6Q1054.6 66.1 1054.6 68.1V76.4Q1054.6 78.4 1056.6 78.4H1064.3Q1066.3 78.4 1066.3 76.4V75.2"/>
<path class="s" d="M1057 74.4Q1058 69 1063.6 68.6V65.3L1068.2 69.9L1063.6 74.4V71.4Q1059.5 71.4 1057 74.4Z"/>
<!-- dots -->
<circle cx="1166.2" cy="73" r="1.3" fill="#fff"/><circle cx="1174" cy="73" r="1.3" fill="#fff"/><circle cx="1181.8" cy="73" r="1.3" fill="#fff"/>

<!-- panel chevron -->
<path d="M537.8 133.8Q533 137 531.2 140Q533 143 537.8 146.2" fill="none" stroke="#3578c4" stroke-width="1.2"/>
<!-- add box -->
<rect x="47.3" y="184" width="60.4" height="29.5" fill="none" stroke="#e0151b" stroke-width="3"/>
<path d="M63.5 193.3V205.8M57.2 199.5H69.8" stroke="#fff" stroke-width="1.1"/>
<!-- grid icons -->
<rect class="s" x="455.5" y="193.5" width="12.5" height="12.3" rx="2.3"/>
<path class="s" d="M461.75 193.5V205.8M455.5 199.65H468"/>
<rect class="s" x="495" y="193.5" width="12.5" height="12.3" rx="2.3"/>
<path class="s" d="M499.2 193.5V205.8M503.3 193.5V205.8M495 197.6H507.5M495 201.7H507.5"/>
<rect x="490" y="213.8" width="24" height="2.5" fill="#2f7bc4" rx="1"/>
<!-- library thumb corner -->
<path d="M40 264.4L63 241.4V262.4Q63 264.4 61 264.4Z" fill="#0c6dd3"/>
<!-- red arrow small -->
<path d="M29.6 226.2L36.2 243.8L33.2 245.3L44.1 255.7L43.2 240.5L40.2 242L31.9 225.4Z" fill="#f41414"/>
<!-- play circle on thumb -->
<circle cx="124" cy="289" r="14.5" fill="#f4f4f4" opacity="0.92"/>
<path d="M120 282.5L130 289L120 295.5Z" fill="none" stroke="#111" stroke-width="1.2" stroke-linejoin="round"/>

<!-- player -->
<path d="M623 598L632.7 592Q632.7 598 632.7 604.2Z" fill="#fff" stroke="#fff" stroke-width="1" stroke-linejoin="round"/>
<rect x="634.3" y="592" width="1.6" height="12.3" fill="#fff"/>
<path d="M673 592.5L684 598L673 603.6Z" fill="#fff" stroke="#fff" stroke-width="1.3" stroke-linejoin="round"/>
<rect x="720.2" y="592" width="1.6" height="12.3" fill="#fff"/>
<path d="M733 598L723.5 592V604.2Z" fill="#fff" stroke="#fff" stroke-width="1" stroke-linejoin="round"/>
<rect x="824" y="596.5" width="206" height="3.2" rx="1.6" fill="#9b9b9b"/>
<circle cx="820" cy="598.2" r="7" fill="#3a3a3a" opacity="0.6"/>
<circle cx="820" cy="598.2" r="5" fill="#7ab6ec"/>
<path class="s" d="M1118 604L1130.5 591.5M1124.5 591.5H1130.5V597.5M1118 598V604H1124"/>

<!-- storyboard red box -->
<rect x="31.5" y="668.5" width="92" height="29.5" fill="none" stroke="#e0151b" stroke-width="3"/>
<!-- toolbar separators -->
<path d="M378.5 672V703M945.5 672V703" stroke="#3c3c3c" stroke-width="1"/>
<!-- add title card -->
<rect class="s" x="268.5" y="678.5" width="15" height="11.5" rx="2"/>
<path d="M271 687.5L273.2 681.2L275.4 687.5M271.8 685.5H274.6" fill="none" stroke="#fff" stroke-width="1"/>
<path d="M276.8 683.8H281M276.8 686.3H281" stroke="#fff" stroke-width="1"/>
<!-- trim -->
<rect class="s" x="397" y="681.4" width="8" height="5" rx="0.8"/>
<path class="s" style="stroke-width:0.9" d="M397.4 677V681.4M404.6 677V681.4M397.4 686.4V690.8M404.6 686.4V690.8M393.2 681.5V686.5M395.2 681.5V686.5M406.8 681.5V686.5M408.8 681.5V686.5"/>
<!-- split -->
<path class="s" d="M470 678.5H466.5Q464.5 678.5 464.5 680.5V687.5Q464.5 689.5 466.5 689.5H470M474 678.5H477.5Q479.5 678.5 479.5 680.5V687.5Q479.5 689.5 477.5 689.5H474M471.9 676V692"/>
<path d="M467 681H468.5M467 687H468.5M475.5 681H477M475.5 687H477" stroke="#fff" stroke-width="0.9"/>
<!-- text -->
<path class="s" d="M536 680V677.9H547V680M541.3 678V690.8M539.6 690.8H543"/>
<circle cx="547.7" cy="687.4" r="4.6" fill="#fff"/>
<path d="M547.7 684.9V689.9M545.2 687.4H550.2" stroke="#222" stroke-width="1.1"/>
<!-- motion -->
<circle class="s" cx="612.9" cy="684.1" r="2.4"/>
<path class="s" d="M610.4 679L612.9 676.6L615.4 679M610.4 689.2L612.9 691.6L615.4 689.2M607.8 681.6L605.4 684.1L607.8 686.6M618 681.6L620.4 684.1L618 686.6"/>
<!-- 3d effects -->
<path class="s" d="M697.6 682.5L701.8 684.8V689.6L697.6 691.9L693.4 689.6V684.8Z M695 686.3L697.6 687.8L700.2 686.3M697.6 687.8V690.4"/>
<path class="s" d="M699.4 676L701.7 678.3L699.4 680.6L697.1 678.3Z"/>
<path class="s" d="M704.4 678.3L707.6 681.5L704.4 684.7L701.2 681.5Z"/>
<!-- filters red box -->
<rect x="780.5" y="672.5" width="77" height="25" fill="none" stroke="#e0151b" stroke-width="3"/>
<!-- filters brush -->
<path class="s" d="M796.6 676.4H805.6V683.6H796.6Z M799.4 683.6V691.4H802.8V683.6 M802.5 676.4V679.5M804 676.4V678.5"/>
<!-- speed -->
<path class="s" d="M873.5 683.3Q880.8 675.6 888.3 683.3 M876.2 680.5L875 682.2M885.7 680.5L887 682.2M881 678V679.5"/>
<path class="s" d="M884.6 679.6L880 687.2Q879.4 688.6 880.8 688.3Q881.6 687.8 881.8 686.8Z"/>
<!-- crop -->
<rect class="s" x="976.6" y="678.6" width="11" height="11" />
<path class="s" d="M974.2 679.5V677.6Q974.2 676.4 975.4 676.4H977.3M986.7 676.4H988.6Q989.8 676.4 989.8 677.6V679.5M989.8 688.7V690.5Q989.8 691.7 988.6 691.7H986.7M977.3 691.7H975.4Q974.2 691.7 974.2 690.5V688.7"/>
<!-- rotate -->
<path class="s" d="M1031.2 686.8A7.3 7.3 0 1 1 1041.8 690.6"/>
<path class="s" d="M1041 686.6V691.2H1045.4"/>
<circle class="s" cx="1038.2" cy="683.8" r="1.3"/>
<!-- trash -->
<path class="s" d="M1075 678.8H1089.5M1079.3 678.6Q1079.5 676.5 1082.2 676.5Q1084.9 676.5 1085.1 678.6M1076.3 678.8L1077.6 690.2Q1077.8 691.6 1079.2 691.6H1085.2Q1086.6 691.6 1086.8 690.2L1088.1 678.8M1080.6 682.8V688.2M1083.8 682.8V688.2"/>
<!-- dots -->
<circle cx="1118.5" cy="684.4" r="1.3" fill="#fff"/><circle cx="1126.2" cy="684.4" r="1.3" fill="#fff"/><circle cx="1134" cy="684.4" r="1.3" fill="#fff"/>

<!-- clip overlays -->
<rect x="276" y="741" width="19" height="17.5" rx="3.5" fill="#7b7b7b"/>
<rect x="74.9" y="853.6" width="17" height="17.4" rx="2.8" fill="none" stroke="#fff" stroke-width="1.5"/>
<path d="M77.3 856.2V859M77.3 860.8V863.4M77.3 865.2V868M89.3 856.2V859M89.3 860.8V863.4M89.3 865.2V868" stroke="#fff" stroke-width="1.3"/>
<path d="M271 857.5H274.5L279 853.2V867.8L274.5 863.5H271Z" fill="none" stroke="#fff" stroke-width="1.4" stroke-linejoin="round"/>
<path d="M282 857.8Q284 860.5 282 863.2M285 855Q288.6 860.5 285 866M288 852.5Q293 860.5 288 868.5" fill="none" stroke="#fff" stroke-width="1.4" stroke-linecap="round"/>

<!-- big red arrows -->
<path d="M78.9 521.1L90.2 615.9L85.8 616.6L94.2 630.6L98.6 614.8L94.2 615.4L80.1 520.9Z" fill="#f41414"/>
<path d="M393.7 734.2L750.8 705.6L751.1 709.6L769.5 702L750.1 697.6L750.4 701.6L393.7 733.2Z" fill="#f41414"/>
</svg>

</body></html>
